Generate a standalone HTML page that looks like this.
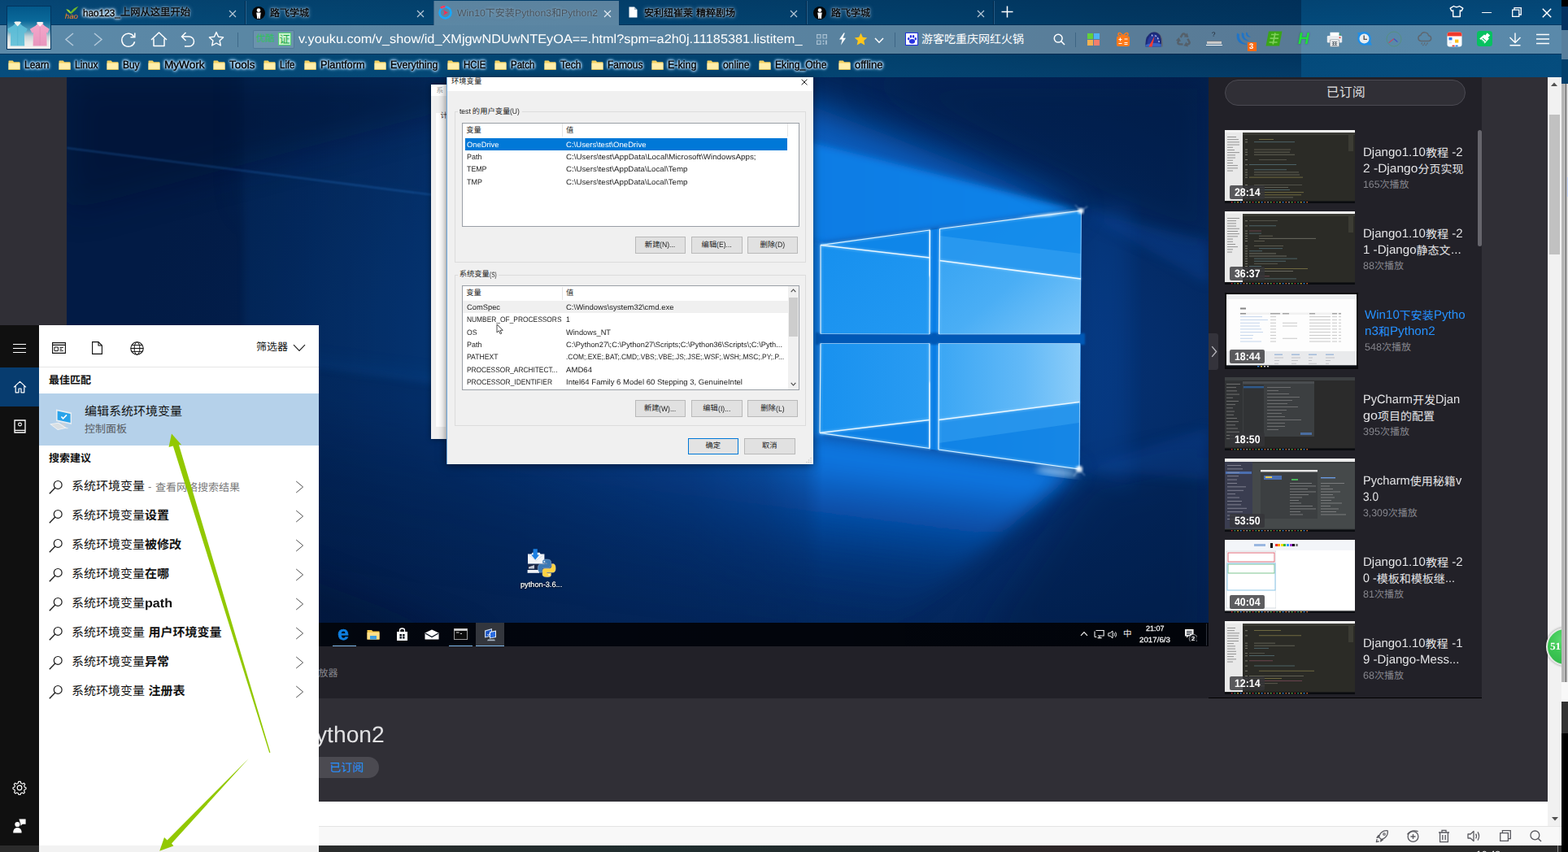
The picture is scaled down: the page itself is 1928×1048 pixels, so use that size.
<!DOCTYPE html>
<html lang="zh"><head><meta charset="utf-8"><title>Win10下安装Python3和Python2</title>
<style>
html,body{margin:0;padding:0;background:#000;}
body{width:1928px;height:1048px;overflow:hidden;position:relative;font-family:"Liberation Sans",sans-serif;text-rendering:geometricPrecision;}
#root{position:absolute;left:0;top:0;width:1928px;height:1048px;overflow:hidden;}
#root div,#root span.t,#root span.c,#root>svg,#root div>svg{position:absolute;}
span.t{white-space:pre;transform-origin:0 50%;display:block;}
span.c{display:block;overflow:visible;line-height:1;white-space:pre;font-family:"Liberation Sans","Noto Sans CJK SC",sans-serif;}
</style></head><body><div id="root">
<div style="left:0px;top:0px;width:1920px;height:95px;background:linear-gradient(90deg,#064c7c 0,#044875 300px,#034471 700px,#02406c 1100px,#023862 1400px,#01345e 1599.5px,#034a7b 1600px,#044c7d 1920px);"></div><div style="left:0px;top:0px;width:1920px;height:95px;background:linear-gradient(180deg,rgba(0,10,40,.10) 0,rgba(0,0,0,0) 30px,rgba(0,0,0,0) 66px,rgba(10,80,130,.25) 95px);"></div><div style="left:533px;top:1px;width:228px;height:30px;background:rgba(255,255,255,.355);"></div><div style="left:0px;top:31px;width:1920px;height:35px;background:rgba(255,255,255,.345);"></div><div style="left:0px;top:30px;width:533px;height:1px;background:rgba(0,20,50,.35);"></div><div style="left:761px;top:30px;width:1159px;height:1px;background:rgba(0,20,50,.35);"></div><div style="left:0px;top:66px;width:1920px;height:1px;background:rgba(0,20,50,.4);"></div><div style="left:301px;top:1px;width:1px;height:29px;background:rgba(0,25,55,.55);"></div><div style="left:302px;top:1px;width:1px;height:29px;background:rgba(140,180,215,.28);"></div><div style="left:991px;top:1px;width:1px;height:29px;background:rgba(0,25,55,.55);"></div><div style="left:992px;top:1px;width:1px;height:29px;background:rgba(140,180,215,.28);"></div><div style="left:1221px;top:1px;width:1px;height:29px;background:rgba(0,25,55,.55);"></div><div style="left:1222px;top:1px;width:1px;height:29px;background:rgba(140,180,215,.28);"></div><div style="left:532.5px;top:1px;width:1px;height:30px;background:rgba(20,60,100,.5);"></div><div style="left:761px;top:1px;width:1px;height:30px;background:rgba(20,60,100,.5);"></div><div style="left:8.3px;top:6.6px;width:54.3px;height:54px;box-sizing:border-box;border:1px solid #02345e;background:linear-gradient(180deg,#03588a 0,#0a699a 34%,#4f9bb9 55%,#c6d4d8 71%,#e8e9e7 85%,#f6f2f0 100%)"></div><svg style="left:9.3px;top:7.6px;" width="52.3" height="52" viewBox="0 0 52.3 52"><defs><linearGradient id="shB" x1="0" y1="0" x2="0" y2="1"><stop offset="0" stop-color="#58b9d4"/><stop offset="1" stop-color="#6cc4da"/></linearGradient><linearGradient id="shP" x1="0" y1="0" x2="0" y2="1"><stop offset="0" stop-color="#f3a8cb"/><stop offset="1" stop-color="#e996bd"/></linearGradient></defs><path d="M7 23.4 L10 20.4 L15.4 20.4 L18.4 23.4 L24.8 27.4 L22.4 32.8 L20.8 31.8 L21.2 48.6 L3.8 48.6 L4.2 31.8 L2.6 32.8 L0.2 27.4 Z" fill="url(#shB)"/><path d="M8.2 19.6 L12.7 24.4 L17.2 19.6 L15.4 18.6 L10 18.6Z" fill="#f4f3ee"/><path d="M12.7 24.4 V48" stroke="#4fb0cc" stroke-width=".6"/><path d="M34.6 23.8 L37.6 20.8 L42.8 20.8 L45.8 23.8 L51.8 27.8 L49.6 32.8 L48.2 32 L48.6 48.6 L31.6 48.6 L32 32 L30.6 32.8 L27.8 27.8Z" fill="url(#shP)"/><path d="M35.8 20 L40.2 24.8 L44.6 20 L43 19 L37.4 19Z" fill="#fbf0f3"/><path d="M40.2 24.8 V48" stroke="#df8ab3" stroke-width=".6"/></svg><svg style="left:79px;top:6.5px;" width="18" height="17" viewBox="0 0 18 17"><path d="M2.4 4.6 Q6 4.4 7.8 8 Q11.4 2.6 17.4 0.8 Q14.6 5.6 8.6 10 Q6.4 10 2.4 4.6Z" fill="#6cb62c"/><path d="M2.4 4.6 Q6 4.4 7.8 8 L7.2 9.4 Q5 8 2.4 4.6Z" fill="#9bd23a"/><text x="0.6" y="15.6" font-size="9" font-style="italic" fill="#f08019" font-family="Liberation Sans,sans-serif" textLength="16" lengthAdjust="spacingAndGlyphs">hao</text></svg><span class="t" style="left:102.00px;top:7.50px;line-height:16px;font-size:12px;color:#000;transform:scaleX(0.9825);--w:45.90;text-shadow:0 0 3px rgba(228,242,255,.95),0 0 3px rgba(228,242,255,.95),0 0 3px rgba(228,242,255,.95),0 0 3px rgba(228,242,255,.95),0 0 5px rgba(215,235,255,.8),0 0 5px rgba(215,235,255,.8),0 0 5px rgba(215,235,255,.8);-webkit-text-stroke:0.35px #000;">hao123_</span><span class="c" style="left:147.90px;top:9.35px;width:86.10px;height:12.3px;font-size:12.3px;color:#000;-webkit-text-stroke:0.35px #000;filter:drop-shadow(0 0 1.2px rgba(225,240,255,.7)) drop-shadow(0 0 2.5px rgba(215,235,255,.5));">上网从这里开始</span><svg style="left:281px;top:11.5px;" width="10" height="10" viewBox="0 0 10 10"><path d="M1 1 L9 9 M9 1 L1 9" stroke="#b7c8d6" stroke-width="1.15" fill="none"/></svg><svg style="left:310px;top:7.5px;" width="16" height="16" viewBox="0 0 16 16"><circle cx="8" cy="8" r="8" fill="#050505"/><circle cx="8" cy="4.6" r="2.3" fill="#fff"/><path d="M5.2 7.6 H10.8 L10.2 11 L9.8 15 H8.4 L8 11.8 L7.6 15 H6.2 L5.8 11Z" fill="#fff"/></svg><span class="c" style="left:332.00px;top:9.50px;width:48.00px;height:12px;font-size:12px;color:#000;-webkit-text-stroke:0.35px #000;filter:drop-shadow(0 0 1.2px rgba(225,240,255,.7)) drop-shadow(0 0 2.5px rgba(215,235,255,.5));">路飞学城</span><svg style="left:511.5px;top:11.5px;" width="10" height="10" viewBox="0 0 10 10"><path d="M1 1 L9 9 M9 1 L1 9" stroke="#b7c8d6" stroke-width="1.15" fill="none"/></svg><svg style="left:539px;top:7px;" width="17" height="17" viewBox="0 0 17 17"><circle cx="8.5" cy="8.5" r="7" fill="none" stroke="#17a8ff" stroke-width="2.6"/><path d="M3 3 A7.6 7.6 0 0 1 8.5 1" stroke="#ff3b5c" stroke-width="2.6" fill="none"/><path d="M6 5.2 L12 8.5 L6 11.8 L7.6 8.5Z" fill="#ff2a50"/></svg><span class="t" style="left:562.00px;top:7.50px;line-height:16px;font-size:12px;color:#47525c;transform:scaleX(1.0239);--w:34.83;text-shadow:0 0 2px rgba(210,225,240,.5);">Win10</span><span class="c" style="left:596.83px;top:9.50px;width:36.00px;height:12px;font-size:12px;color:#47525c;filter:drop-shadow(0 0 2px rgba(210,225,240,.5));">下安装</span><span class="t" style="left:632.83px;top:7.50px;line-height:16px;font-size:12px;color:#47525c;transform:scaleX(1.0239);--w:45.09;text-shadow:0 0 2px rgba(210,225,240,.5);">Python3</span><span class="c" style="left:677.91px;top:9.50px;width:12.00px;height:12px;font-size:12px;color:#47525c;filter:drop-shadow(0 0 2px rgba(210,225,240,.5));">和</span><span class="t" style="left:689.91px;top:7.50px;line-height:16px;font-size:12px;color:#47525c;transform:scaleX(1.0239);--w:45.09;text-shadow:0 0 2px rgba(210,225,240,.5);">Python2</span><svg style="left:741.5px;top:11.5px;" width="10" height="10" viewBox="0 0 10 10"><path d="M1 1 L9 9 M9 1 L1 9" stroke="#e3ebf2" stroke-width="1.15" fill="none"/></svg><svg style="left:773px;top:8px;" width="11" height="14" viewBox="0 0 11 14"><path d="M0.5 0.5 H7 L10.5 4 V13.5 H0.5Z" fill="#fff"/><path d="M7 0.5 V4 H10.5Z" fill="#9fb3c4"/></svg><span class="c" style="left:792.00px;top:9.50px;width:60.00px;height:12px;font-size:12px;color:#000;-webkit-text-stroke:0.35px #000;filter:drop-shadow(0 0 1.2px rgba(225,240,255,.7)) drop-shadow(0 0 2.5px rgba(215,235,255,.5));">安利纽崔莱</span><span class="t" style="left:852.00px;top:7.50px;line-height:16px;font-size:12px;color:#000;transform:scaleX(1.1999);--w:4.00;text-shadow:0 0 3px rgba(228,242,255,.95),0 0 3px rgba(228,242,255,.95),0 0 3px rgba(228,242,255,.95),0 0 3px rgba(228,242,255,.95),0 0 5px rgba(215,235,255,.8),0 0 5px rgba(215,235,255,.8),0 0 5px rgba(215,235,255,.8);-webkit-text-stroke:0.35px #000;"> </span><span class="c" style="left:856.00px;top:9.50px;width:48.00px;height:12px;font-size:12px;color:#000;-webkit-text-stroke:0.35px #000;filter:drop-shadow(0 0 1.2px rgba(225,240,255,.7)) drop-shadow(0 0 2.5px rgba(215,235,255,.5));">精粹剧场</span><svg style="left:971px;top:11.5px;" width="10" height="10" viewBox="0 0 10 10"><path d="M1 1 L9 9 M9 1 L1 9" stroke="#b7c8d6" stroke-width="1.15" fill="none"/></svg><svg style="left:1000px;top:7.5px;" width="16" height="16" viewBox="0 0 16 16"><circle cx="8" cy="8" r="8" fill="#050505"/><circle cx="8" cy="4.6" r="2.3" fill="#fff"/><path d="M5.2 7.6 H10.8 L10.2 11 L9.8 15 H8.4 L8 11.8 L7.6 15 H6.2 L5.8 11Z" fill="#fff"/></svg><span class="c" style="left:1022.00px;top:9.50px;width:48.00px;height:12px;font-size:12px;color:#000;-webkit-text-stroke:0.35px #000;filter:drop-shadow(0 0 1.2px rgba(225,240,255,.7)) drop-shadow(0 0 2.5px rgba(215,235,255,.5));">路飞学城</span><svg style="left:1200.5px;top:11.5px;" width="10" height="10" viewBox="0 0 10 10"><path d="M1 1 L9 9 M9 1 L1 9" stroke="#b7c8d6" stroke-width="1.15" fill="none"/></svg><svg style="left:1231px;top:7px;" width="15" height="15" viewBox="0 0 15 15"><path d="M7.5 0.5 V14.5 M0.5 7.5 H14.5" stroke="#fff" stroke-width="1.5"/></svg><svg style="left:1782px;top:6px;" width="18" height="16" viewBox="0 0 18 16"><path d="M5.5 1.5 Q9 4 12.5 1.5 L16.8 4.2 L15 7.6 L13.3 6.8 V14.5 H4.7 V6.8 L3 7.6 L1.2 4.2 Z" fill="none" stroke="#fff" stroke-width="1.4" stroke-linejoin="round"/></svg><div style="left:1822px;top:15px;width:12px;height:1.3px;background:#fff;"></div><svg style="left:1859px;top:9px;" width="12" height="12" viewBox="0 0 12 12"><path d="M0.7 3.2 H8.8 V11.3 H0.7Z M3 3 V0.7 H11.3 V9 H9" fill="none" stroke="#fff" stroke-width="1.3"/></svg><svg style="left:1896px;top:9.5px;" width="12" height="12" viewBox="0 0 12 12"><path d="M0.8 0.8 L11.2 11.2 M11.2 0.8 L0.8 11.2" stroke="#fff" stroke-width="1.5"/></svg><svg style="left:79px;top:40px;" width="13" height="17" viewBox="0 0 13 17"><path d="M11 1 L2 8.5 L11 16" fill="none" stroke="#b3c9da" stroke-width="1.5"/></svg><svg style="left:114px;top:40px;" width="13" height="17" viewBox="0 0 13 17"><path d="M2 1 L11 8.5 L2 16" fill="none" stroke="#b3c9da" stroke-width="1.5"/></svg><svg style="left:148px;top:38.5px;" width="20" height="20" viewBox="0 0 20 20"><path d="M16.6 6 A8 8 0 1 0 17.6 12.2" fill="none" stroke="#fff" stroke-width="1.5"/><path d="M17.8 1.5 V6.8 H12.5" fill="none" stroke="#fff" stroke-width="1.5"/></svg><svg style="left:184.5px;top:39px;" width="21" height="19" viewBox="0 0 21 19"><path d="M1 10 L10.5 1 L20 10 M4 8.5 V17.5 H17 V8.5" fill="none" stroke="#fff" stroke-width="1.5" stroke-linejoin="round"/></svg><svg style="left:222px;top:39px;" width="19" height="19" viewBox="0 0 19 19"><path d="M6.5 1 L1.5 6 L6.5 11 M1.5 6 H10.5 A6 6 0 0 1 10.5 18 H5" fill="none" stroke="#fff" stroke-width="1.5"/></svg><svg style="left:256px;top:38px;" width="20" height="20" viewBox="0 0 20 20"><path d="M10 1.6 L12.5 7.2 L18.6 7.9 L14.1 12 L15.3 18 L10 15 L4.7 18 L5.9 12 L1.4 7.9 L7.5 7.2Z" fill="none" stroke="#fff" stroke-width="1.4" stroke-linejoin="round"/></svg><div style="left:292px;top:40px;width:1px;height:18px;background:rgba(40,80,115,.55);"></div><div style="left:310.6px;top:37.3px;width:51px;height:22.3px;box-sizing:border-box;border:1px solid rgba(60,100,135,.55);background:rgba(255,255,255,.10);border-radius:2px"></div><span class="c" style="left:314.50px;top:42.55px;width:23.00px;height:11.5px;font-size:11.5px;color:#2fc25b;">优酷</span><div style="left:342px;top:40.4px;width:16.2px;height:15.4px;background:#c9f3cf;box-sizing:border-box;border:1px solid #4fcf6f"></div><span class="c" style="left:343.50px;top:41.80px;width:13.00px;height:13px;font-size:13px;color:#18a844;">证</span><span class="t" style="left:367.00px;top:38.60px;line-height:20px;font-size:15.5px;color:#fff;transform:scaleX(1.0521);--w:619.50;">v.youku.com/v_show/id_XMjgwNDUwNTEyOA==.html?spm=a2h0j.11185381.listitem_</span><svg style="left:1004px;top:41.5px;" width="13" height="13" viewBox="0 0 13 13"><path d="M0.6 0.6 H5 V5 H0.6Z M8 0.6 H12.4 V5 H8Z M0.6 8 H5 V12.4 H0.6Z" fill="none" stroke="#a8c0d2" stroke-width="1.2"/><path d="M7.6 7.6 H9.4 V9.4 H7.6Z M11 7.6 H12.8 V12.8 H11Z M7.6 11 H9.4 V12.8 H7.6Z" fill="#a8c0d2"/></svg><svg style="left:1031px;top:40px;" width="10" height="16" viewBox="0 0 10 16"><path d="M6.5 0.5 L1 8.5 H4.6 L3 15.5 L9 6.8 H5.4 L7.8 0.5Z" fill="#fff"/></svg><svg style="left:1049.5px;top:40px;" width="17" height="16" viewBox="0 0 17 16"><path d="M8.5 0.8 L10.8 5.8 L16.2 6.4 L12.2 10.1 L13.3 15.4 L8.5 12.7 L3.7 15.4 L4.8 10.1 L0.8 6.4 L6.2 5.8Z" fill="#ffc61a"/></svg><svg style="left:1075px;top:46px;" width="12" height="8" viewBox="0 0 12 8"><path d="M1 1 L6 6.2 L11 1" fill="none" stroke="#fff" stroke-width="1.5"/></svg><div style="left:1100px;top:40px;width:1px;height:18px;background:rgba(40,80,115,.55);"></div><div style="left:1113px;top:40px;width:16px;height:15.5px;box-sizing:border-box;border:1.5px solid #2033e0;background:#fff"></div><svg style="left:1114.5px;top:41.5px;" width="13" height="12.5" viewBox="0 0 13 12.5"><ellipse cx="6.5" cy="8.8" rx="3.6" ry="2.9" fill="#2932e1"/><ellipse cx="2.2" cy="5.8" rx="1.3" ry="1.7" fill="#2932e1"/><ellipse cx="4.9" cy="2.9" rx="1.3" ry="1.8" fill="#2932e1"/><ellipse cx="8.1" cy="2.9" rx="1.3" ry="1.8" fill="#2932e1"/><ellipse cx="10.8" cy="5.8" rx="1.3" ry="1.7" fill="#2932e1"/></svg><span class="c" style="left:1133.00px;top:41.30px;width:126.00px;height:14px;font-size:14px;color:#fff;">游客吃重庆网红火锅</span><svg style="left:1295px;top:40.5px;" width="15" height="15" viewBox="0 0 15 15"><circle cx="6.2" cy="6.2" r="4.9" fill="none" stroke="#fff" stroke-width="1.5"/><path d="M9.8 9.8 L14 14" stroke="#fff" stroke-width="1.6"/></svg><div style="left:1321.5px;top:40px;width:1px;height:18px;background:rgba(40,80,115,.55);"></div><div style="left:1337px;top:40.5px;width:7px;height:7px;background:#62d13a;"></div><div style="left:1345px;top:40.5px;width:7px;height:7px;background:#4db3f5;"></div><div style="left:1337px;top:48.5px;width:7px;height:7px;background:#f5b150;"></div><div style="left:1345px;top:48.5px;width:7px;height:7px;background:#f57f6c;"></div><svg style="left:1372px;top:38.5px;" width="18" height="19" viewBox="0 0 18 19"><path d="M9 5 Q4 -1 3 3.2 Q2.6 5.5 9 5 Q15.4 5.5 15 3.2 Q14 -1 9 5" fill="none" stroke="#ff7a1a" stroke-width="1.6"/><rect x="1" y="5.5" width="16" height="12.5" rx="2" fill="#ff7a1a"/><path d="M3.5 9.5 H7.5 M5.5 7.5 V11.5 M3.5 14.5 H7.5 M10.5 9 H14.5 M10.5 13.5 H14.5 M10.5 15.5 H14.5" stroke="#fff" stroke-width="1.2"/></svg><svg style="left:1408px;top:37.5px;" width="22" height="21" viewBox="0 0 22 21"><path d="M0.6 19.4 Q-0.6 6.4 7.4 2.2 Q15 -0.8 20 6.6 Q22.4 11 21.6 19.4Z" fill="#5f6873"/><path d="M0.6 19.4 Q-0.6 6.4 7.4 2.2 Q14 -0.4 18.4 5.4 Q20.6 10 19.8 19.4Z" fill="#1b2a78"/><path d="M2.6 18.4 Q2 8.6 8 5 Q13.4 2.8 16.6 7.4 Q18.4 11 17.8 18.4Z" fill="#27399a"/><path d="M0.6 19.4 H19.8 Q19.9 17.6 19.7 16 Q10 13.6 0.5 17Z" fill="#3f6fd0" opacity=".8"/><path d="M4.4 19.6 L11.6 6.6 L8.6 19.6Z" fill="#ff3b30"/><path d="M12.6 5.4 l.9 1.7 M15.4 8.4 l.8 1.8 M16.8 12.2 l.5 1.8 M8.4 4.6 l.4 1.9" stroke="#e8ecff" stroke-width="1.1"/></svg><svg style="left:1446px;top:38.5px;" width="19" height="19" viewBox="0 0 19 19"><g transform="rotate(0 9.5 10.4)"><path d="M5.6 7 L8 3.2 Q9.5 1.6 11 3.2 L12.2 5" fill="none" stroke="#55606a" stroke-width="2.5"/><path d="M9.8 6.6 L15.4 7 L13.8 1.6Z" fill="#55606a"/></g><g transform="rotate(120 9.5 10.4)"><path d="M5.6 7 L8 3.2 Q9.5 1.6 11 3.2 L12.2 5" fill="none" stroke="#55606a" stroke-width="2.5"/><path d="M9.8 6.6 L15.4 7 L13.8 1.6Z" fill="#55606a"/></g><g transform="rotate(240 9.5 10.4)"><path d="M5.6 7 L8 3.2 Q9.5 1.6 11 3.2 L12.2 5" fill="none" stroke="#55606a" stroke-width="2.5"/><path d="M9.8 6.6 L15.4 7 L13.8 1.6Z" fill="#55606a"/></g></svg><span class="t" style="left:1490.30px;top:38.30px;line-height:10px;font-size:8px;color:#1c232c;--w:4.45;">?</span><div style="left:1484px;top:49.5px;width:17.5px;height:4.6px;background:#c9c9c9;"></div><div style="left:1483px;top:55px;width:19.5px;height:1.2px;background:#fff;"></div><div style="left:1484px;top:49.5px;width:17.5px;height:0.8px;background:#6f7a85;"></div><svg style="left:1519px;top:38.5px;" width="21" height="18" viewBox="0 0 21 18"><path d="M2.2 1.5 Q0 10 6 14 Q10 16.4 14.6 15.4 Q8 13.6 5.6 9 Q4.2 6 5 3 Q3.4 2.8 2.2 1.5Z" fill="#1f74c8"/><path d="M8 0.8 Q6.6 6.6 10.6 9.8 Q13.4 11.8 17 11 Q12.4 9.6 11 6.4 Q10.2 4.2 10.6 2.2 Q9 2 8 0.8Z" fill="#1f74c8"/><path d="M13 0.6 Q12.4 4 14.8 6 Q16.6 7.2 19 6.6 Q16.2 5.6 15.4 3.6 Q15 2.6 15.2 1.6 Q13.8 1.4 13 0.6Z" fill="#1f74c8"/></svg><div style="left:1534px;top:52px;width:10.5px;height:10.5px;background:#ff6a13;"></div><span class="t" style="left:1536.40px;top:51.50px;line-height:12px;font-size:9.5px;color:#fff;font-weight:bold;--w:5.28;">3</span><svg style="left:1556px;top:38px;" width="21" height="19" viewBox="0 0 21 19"><path d="M4 0.5 H20.5 L17 18.5 H0.5Z" fill="#3aa516"/><path d="M7 4.5 H16.5 M5.6 9.2 H16 M4.6 14 H14.6 M12 2.5 L9.2 16.5" stroke="#7fd05a" stroke-width="1.7" fill="none"/></svg><span class="t" style="left:1596.00px;top:35.30px;line-height:26px;font-size:20px;color:#1fe03a;font-weight:bold;font-style:italic;transform:scaleX(0.9500);--w:13.72;text-shadow:0 0 2px rgba(10,60,30,.5);">H</span><svg style="left:1630.5px;top:38.5px;" width="20" height="19" viewBox="0 0 20 19"><path d="M4.5 0.8 H15.5 V5 H4.5Z" fill="#fff"/><rect x="0.8" y="5" width="18.4" height="8.4" rx="1.2" fill="#e8ebee"/><path d="M4.5 10 H15.5 V18.2 H4.5Z" fill="#fff" stroke="#8a949c" stroke-width=".8"/><path d="M6.5 12.5 H13.5 M6.5 14.6 H13.5 M6.5 16.6 H13.5 M8.5 12 V17 M11.5 12 V17" stroke="#5b6670" stroke-width=".9"/><circle cx="16.5" cy="7.2" r="1" fill="#e53935"/><circle cx="16.6" cy="3.4" r=".9" fill="#3bb54a"/></svg><svg style="left:1667.5px;top:37.5px;" width="20" height="19" viewBox="0 0 20 19"><circle cx="9.5" cy="9.5" r="7.2" fill="#e9edf0" stroke="#1f8fe8" stroke-width="2.4"/><path d="M1 2 H7 L3 6.5Z M19 17.5 H13 L17 13Z" fill="#1f8fe8"/><path d="M9.2 5.5 V10.4 H13" stroke="#555" stroke-width="1.4" fill="none"/></svg><svg style="left:1704px;top:38px;" width="20" height="20" viewBox="0 0 20 20"><circle cx="10" cy="10" r="9" fill="none" stroke="#56907f" stroke-width="1"/><path d="M3.6 14.6 L10 9.6" stroke="#d23b57" stroke-width="1.1"/><path d="M10 9.6 L14.4 13.6" stroke="#3a49c6" stroke-width="1.1"/></svg><svg style="left:1741.5px;top:39px;" width="20" height="18" viewBox="0 0 20 18"><path d="M5 11.5 A3.7 3.7 0 0 1 5 4.2 A5 5 0 0 1 14.6 4.8 A3.4 3.4 0 0 1 15 11.5Z" fill="none" stroke="#5f6770" stroke-width="1.5"/><path d="M6.6 13.5 L5.8 15.5 M10 13.5 L9.2 15.5 M13.4 13.5 L12.6 15.5 M8.2 15.6 L7.6 17.2 M11.6 15.6 L11 17.2" stroke="#5f6770" stroke-width="1.2"/></svg><svg style="left:1779px;top:38.5px;" width="19" height="19" viewBox="0 0 19 19"><rect x="0.5" y="0.5" width="18" height="18" rx="3" fill="#fff"/><path d="M0.5 5.5 V3.5 Q0.5 0.5 3.5 0.5 H15.5 Q18.5 0.5 18.5 3.5 V5.5Z" fill="#f0392b"/><rect x="2.5" y="7" width="4" height="3.4" fill="#2a7df0"/><rect x="10" y="9.6" width="4.4" height="4" fill="#ffc21a"/><rect x="2.5" y="12" width="3.4" height="2.6" fill="#e8ebef"/><rect x="6.6" y="16.6" width="3" height="1.6" fill="#f0392b"/><rect x="10.6" y="16.6" width="3" height="1.6" fill="#2a7df0"/></svg><svg style="left:1815.5px;top:38px;" width="19" height="19" viewBox="0 0 19 19"><rect x="0" y="0" width="19" height="19" rx="3.5" fill="#07c160"/><path d="M12.6 2.6 L16.2 5.4 L13.6 8.2 L15 9.6 L9.6 15.4 L3.2 9.4 L9 4.6 L10.4 5.6Z" fill="#fff"/><path d="M5 10.6 L9.2 14.4 M7 8.8 L11.2 12.6" stroke="#07c160" stroke-width="1.1"/></svg><svg style="left:1855px;top:40px;" width="16" height="17" viewBox="0 0 16 17"><path d="M8 0.5 V12 M1.5 6 L8 12.4 L14.5 6 M1.5 15.8 H14.5" fill="none" stroke="#fff" stroke-width="1.4"/></svg><svg style="left:1889px;top:41px;" width="16" height="14" viewBox="0 0 16 14"><path d="M0 1.5 H16 M0 7 H16 M0 12.5 H16" stroke="#fff" stroke-width="1.5"/></svg><svg style="left:10px;top:73.5px;" width="15" height="12" viewBox="0 0 15 12"><path d="M0.5 1.2 Q0.5 0.5 1.2 0.5 H5.6 L7.2 2.3 H13.8 Q14.5 2.3 14.5 3 V11.5 H0.5 Z" fill="#f3d163"/><path d="M0.5 3.6 H14.5 V11.5 H0.5 Z" fill="#ffeeaa"/><path d="M0.5 11 H14.5 V11.8 H0.5Z" fill="#e9c14d"/></svg><span class="t" style="left:29.50px;top:71.10px;line-height:17px;font-size:13.3px;color:#000;transform:scaleX(0.8966);--w:30.50;text-shadow:0 0 3px rgba(190,225,255,.95),0 0 3px rgba(190,225,255,.95),0 0 3px rgba(190,225,255,.95),0 0 3px rgba(190,225,255,.95),0 0 5px rgba(170,215,252,.8),0 0 5px rgba(170,215,252,.8),0 0 5px rgba(170,215,252,.8);-webkit-text-stroke:0.4px #000;">Learn</span><svg style="left:72px;top:73.5px;" width="15" height="12" viewBox="0 0 15 12"><path d="M0.5 1.2 Q0.5 0.5 1.2 0.5 H5.6 L7.2 2.3 H13.8 Q14.5 2.3 14.5 3 V11.5 H0.5 Z" fill="#f3d163"/><path d="M0.5 3.6 H14.5 V11.5 H0.5 Z" fill="#ffeeaa"/><path d="M0.5 11 H14.5 V11.8 H0.5Z" fill="#e9c14d"/></svg><span class="t" style="left:91.50px;top:71.10px;line-height:17px;font-size:13.3px;color:#000;transform:scaleX(0.8963);--w:28.50;text-shadow:0 0 3px rgba(190,225,255,.95),0 0 3px rgba(190,225,255,.95),0 0 3px rgba(190,225,255,.95),0 0 3px rgba(190,225,255,.95),0 0 5px rgba(170,215,252,.8),0 0 5px rgba(170,215,252,.8),0 0 5px rgba(170,215,252,.8);-webkit-text-stroke:0.4px #000;">Linux</span><svg style="left:131px;top:73.5px;" width="15" height="12" viewBox="0 0 15 12"><path d="M0.5 1.2 Q0.5 0.5 1.2 0.5 H5.6 L7.2 2.3 H13.8 Q14.5 2.3 14.5 3 V11.5 H0.5 Z" fill="#f3d163"/><path d="M0.5 3.6 H14.5 V11.5 H0.5 Z" fill="#ffeeaa"/><path d="M0.5 11 H14.5 V11.8 H0.5Z" fill="#e9c14d"/></svg><span class="t" style="left:150.50px;top:71.10px;line-height:17px;font-size:13.3px;color:#000;transform:scaleX(0.8945);--w:20.50;text-shadow:0 0 3px rgba(190,225,255,.95),0 0 3px rgba(190,225,255,.95),0 0 3px rgba(190,225,255,.95),0 0 3px rgba(190,225,255,.95),0 0 5px rgba(170,215,252,.8),0 0 5px rgba(170,215,252,.8),0 0 5px rgba(170,215,252,.8);-webkit-text-stroke:0.4px #000;">Buy</span><svg style="left:182px;top:73.5px;" width="15" height="12" viewBox="0 0 15 12"><path d="M0.5 1.2 Q0.5 0.5 1.2 0.5 H5.6 L7.2 2.3 H13.8 Q14.5 2.3 14.5 3 V11.5 H0.5 Z" fill="#f3d163"/><path d="M0.5 3.6 H14.5 V11.5 H0.5 Z" fill="#ffeeaa"/><path d="M0.5 11 H14.5 V11.8 H0.5Z" fill="#e9c14d"/></svg><span class="t" style="left:201.50px;top:71.10px;line-height:17px;font-size:13.3px;color:#000;transform:scaleX(1.0202);--w:49.50;text-shadow:0 0 3px rgba(190,225,255,.95),0 0 3px rgba(190,225,255,.95),0 0 3px rgba(190,225,255,.95),0 0 3px rgba(190,225,255,.95),0 0 5px rgba(170,215,252,.8),0 0 5px rgba(170,215,252,.8),0 0 5px rgba(170,215,252,.8);-webkit-text-stroke:0.4px #000;">MyWork</span><svg style="left:262px;top:73.5px;" width="15" height="12" viewBox="0 0 15 12"><path d="M0.5 1.2 Q0.5 0.5 1.2 0.5 H5.6 L7.2 2.3 H13.8 Q14.5 2.3 14.5 3 V11.5 H0.5 Z" fill="#f3d163"/><path d="M0.5 3.6 H14.5 V11.5 H0.5 Z" fill="#ffeeaa"/><path d="M0.5 11 H14.5 V11.8 H0.5Z" fill="#e9c14d"/></svg><span class="t" style="left:281.50px;top:71.10px;line-height:17px;font-size:13.3px;color:#000;transform:scaleX(1.0145);--w:31.50;text-shadow:0 0 3px rgba(190,225,255,.95),0 0 3px rgba(190,225,255,.95),0 0 3px rgba(190,225,255,.95),0 0 3px rgba(190,225,255,.95),0 0 5px rgba(170,215,252,.8),0 0 5px rgba(170,215,252,.8),0 0 5px rgba(170,215,252,.8);-webkit-text-stroke:0.4px #000;">Tools</span><svg style="left:324px;top:73.5px;" width="15" height="12" viewBox="0 0 15 12"><path d="M0.5 1.2 Q0.5 0.5 1.2 0.5 H5.6 L7.2 2.3 H13.8 Q14.5 2.3 14.5 3 V11.5 H0.5 Z" fill="#f3d163"/><path d="M0.5 3.6 H14.5 V11.5 H0.5 Z" fill="#ffeeaa"/><path d="M0.5 11 H14.5 V11.8 H0.5Z" fill="#e9c14d"/></svg><span class="t" style="left:343.50px;top:71.10px;line-height:17px;font-size:13.3px;color:#000;transform:scaleX(0.8627);--w:18.50;text-shadow:0 0 3px rgba(190,225,255,.95),0 0 3px rgba(190,225,255,.95),0 0 3px rgba(190,225,255,.95),0 0 3px rgba(190,225,255,.95),0 0 5px rgba(170,215,252,.8),0 0 5px rgba(170,215,252,.8),0 0 5px rgba(170,215,252,.8);-webkit-text-stroke:0.4px #000;">Life</span><svg style="left:374px;top:73.5px;" width="15" height="12" viewBox="0 0 15 12"><path d="M0.5 1.2 Q0.5 0.5 1.2 0.5 H5.6 L7.2 2.3 H13.8 Q14.5 2.3 14.5 3 V11.5 H0.5 Z" fill="#f3d163"/><path d="M0.5 3.6 H14.5 V11.5 H0.5 Z" fill="#ffeeaa"/><path d="M0.5 11 H14.5 V11.8 H0.5Z" fill="#e9c14d"/></svg><span class="t" style="left:393.50px;top:71.10px;line-height:17px;font-size:13.3px;color:#000;transform:scaleX(0.9575);--w:54.50;text-shadow:0 0 3px rgba(190,225,255,.95),0 0 3px rgba(190,225,255,.95),0 0 3px rgba(190,225,255,.95),0 0 3px rgba(190,225,255,.95),0 0 5px rgba(170,215,252,.8),0 0 5px rgba(170,215,252,.8),0 0 5px rgba(170,215,252,.8);-webkit-text-stroke:0.4px #000;">Plantform</span><svg style="left:460px;top:73.5px;" width="15" height="12" viewBox="0 0 15 12"><path d="M0.5 1.2 Q0.5 0.5 1.2 0.5 H5.6 L7.2 2.3 H13.8 Q14.5 2.3 14.5 3 V11.5 H0.5 Z" fill="#f3d163"/><path d="M0.5 3.6 H14.5 V11.5 H0.5 Z" fill="#ffeeaa"/><path d="M0.5 11 H14.5 V11.8 H0.5Z" fill="#e9c14d"/></svg><span class="t" style="left:479.50px;top:71.10px;line-height:17px;font-size:13.3px;color:#000;transform:scaleX(0.9309);--w:58.50;text-shadow:0 0 3px rgba(190,225,255,.95),0 0 3px rgba(190,225,255,.95),0 0 3px rgba(190,225,255,.95),0 0 3px rgba(190,225,255,.95),0 0 5px rgba(170,215,252,.8),0 0 5px rgba(170,215,252,.8),0 0 5px rgba(170,215,252,.8);-webkit-text-stroke:0.4px #000;">Everything</span><svg style="left:550px;top:73.5px;" width="15" height="12" viewBox="0 0 15 12"><path d="M0.5 1.2 Q0.5 0.5 1.2 0.5 H5.6 L7.2 2.3 H13.8 Q14.5 2.3 14.5 3 V11.5 H0.5 Z" fill="#f3d163"/><path d="M0.5 3.6 H14.5 V11.5 H0.5 Z" fill="#ffeeaa"/><path d="M0.5 11 H14.5 V11.8 H0.5Z" fill="#e9c14d"/></svg><span class="t" style="left:569.50px;top:71.10px;line-height:17px;font-size:13.3px;color:#000;transform:scaleX(0.8654);--w:27.50;text-shadow:0 0 3px rgba(190,225,255,.95),0 0 3px rgba(190,225,255,.95),0 0 3px rgba(190,225,255,.95),0 0 3px rgba(190,225,255,.95),0 0 5px rgba(170,215,252,.8),0 0 5px rgba(170,215,252,.8),0 0 5px rgba(170,215,252,.8);-webkit-text-stroke:0.4px #000;">HCIE</span><svg style="left:608px;top:73.5px;" width="15" height="12" viewBox="0 0 15 12"><path d="M0.5 1.2 Q0.5 0.5 1.2 0.5 H5.6 L7.2 2.3 H13.8 Q14.5 2.3 14.5 3 V11.5 H0.5 Z" fill="#f3d163"/><path d="M0.5 3.6 H14.5 V11.5 H0.5 Z" fill="#ffeeaa"/><path d="M0.5 11 H14.5 V11.8 H0.5Z" fill="#e9c14d"/></svg><span class="t" style="left:627.50px;top:71.10px;line-height:17px;font-size:13.3px;color:#000;transform:scaleX(0.8674);--w:29.50;text-shadow:0 0 3px rgba(190,225,255,.95),0 0 3px rgba(190,225,255,.95),0 0 3px rgba(190,225,255,.95),0 0 3px rgba(190,225,255,.95),0 0 5px rgba(170,215,252,.8),0 0 5px rgba(170,215,252,.8),0 0 5px rgba(170,215,252,.8);-webkit-text-stroke:0.4px #000;">Patch</span><svg style="left:669px;top:73.5px;" width="15" height="12" viewBox="0 0 15 12"><path d="M0.5 1.2 Q0.5 0.5 1.2 0.5 H5.6 L7.2 2.3 H13.8 Q14.5 2.3 14.5 3 V11.5 H0.5 Z" fill="#f3d163"/><path d="M0.5 3.6 H14.5 V11.5 H0.5 Z" fill="#ffeeaa"/><path d="M0.5 11 H14.5 V11.8 H0.5Z" fill="#e9c14d"/></svg><span class="t" style="left:688.50px;top:71.10px;line-height:17px;font-size:13.3px;color:#000;transform:scaleX(0.9077);--w:25.50;text-shadow:0 0 3px rgba(190,225,255,.95),0 0 3px rgba(190,225,255,.95),0 0 3px rgba(190,225,255,.95),0 0 3px rgba(190,225,255,.95),0 0 5px rgba(170,215,252,.8),0 0 5px rgba(170,215,252,.8),0 0 5px rgba(170,215,252,.8);-webkit-text-stroke:0.4px #000;">Tech</span><svg style="left:727px;top:73.5px;" width="15" height="12" viewBox="0 0 15 12"><path d="M0.5 1.2 Q0.5 0.5 1.2 0.5 H5.6 L7.2 2.3 H13.8 Q14.5 2.3 14.5 3 V11.5 H0.5 Z" fill="#f3d163"/><path d="M0.5 3.6 H14.5 V11.5 H0.5 Z" fill="#ffeeaa"/><path d="M0.5 11 H14.5 V11.8 H0.5Z" fill="#e9c14d"/></svg><span class="t" style="left:746.50px;top:71.10px;line-height:17px;font-size:13.3px;color:#000;transform:scaleX(0.9054);--w:43.50;text-shadow:0 0 3px rgba(190,225,255,.95),0 0 3px rgba(190,225,255,.95),0 0 3px rgba(190,225,255,.95),0 0 3px rgba(190,225,255,.95),0 0 5px rgba(170,215,252,.8),0 0 5px rgba(170,215,252,.8),0 0 5px rgba(170,215,252,.8);-webkit-text-stroke:0.4px #000;">Famous</span><svg style="left:801px;top:73.5px;" width="15" height="12" viewBox="0 0 15 12"><path d="M0.5 1.2 Q0.5 0.5 1.2 0.5 H5.6 L7.2 2.3 H13.8 Q14.5 2.3 14.5 3 V11.5 H0.5 Z" fill="#f3d163"/><path d="M0.5 3.6 H14.5 V11.5 H0.5 Z" fill="#ffeeaa"/><path d="M0.5 11 H14.5 V11.8 H0.5Z" fill="#e9c14d"/></svg><span class="t" style="left:820.50px;top:71.10px;line-height:17px;font-size:13.3px;color:#000;transform:scaleX(0.9416);--w:35.50;text-shadow:0 0 3px rgba(190,225,255,.95),0 0 3px rgba(190,225,255,.95),0 0 3px rgba(190,225,255,.95),0 0 3px rgba(190,225,255,.95),0 0 5px rgba(170,215,252,.8),0 0 5px rgba(170,215,252,.8),0 0 5px rgba(170,215,252,.8);-webkit-text-stroke:0.4px #000;">E-king</span><svg style="left:869px;top:73.5px;" width="15" height="12" viewBox="0 0 15 12"><path d="M0.5 1.2 Q0.5 0.5 1.2 0.5 H5.6 L7.2 2.3 H13.8 Q14.5 2.3 14.5 3 V11.5 H0.5 Z" fill="#f3d163"/><path d="M0.5 3.6 H14.5 V11.5 H0.5 Z" fill="#ffeeaa"/><path d="M0.5 11 H14.5 V11.8 H0.5Z" fill="#e9c14d"/></svg><span class="t" style="left:888.50px;top:71.10px;line-height:17px;font-size:13.3px;color:#000;transform:scaleX(0.9155);--w:32.50;text-shadow:0 0 3px rgba(190,225,255,.95),0 0 3px rgba(190,225,255,.95),0 0 3px rgba(190,225,255,.95),0 0 3px rgba(190,225,255,.95),0 0 5px rgba(170,215,252,.8),0 0 5px rgba(170,215,252,.8),0 0 5px rgba(170,215,252,.8);-webkit-text-stroke:0.4px #000;">online</span><svg style="left:933px;top:73.5px;" width="15" height="12" viewBox="0 0 15 12"><path d="M0.5 1.2 Q0.5 0.5 1.2 0.5 H5.6 L7.2 2.3 H13.8 Q14.5 2.3 14.5 3 V11.5 H0.5 Z" fill="#f3d163"/><path d="M0.5 3.6 H14.5 V11.5 H0.5 Z" fill="#ffeeaa"/><path d="M0.5 11 H14.5 V11.8 H0.5Z" fill="#e9c14d"/></svg><span class="t" style="left:952.50px;top:71.10px;line-height:17px;font-size:13.3px;color:#000;transform:scaleX(0.9136);--w:63.50;text-shadow:0 0 3px rgba(190,225,255,.95),0 0 3px rgba(190,225,255,.95),0 0 3px rgba(190,225,255,.95),0 0 3px rgba(190,225,255,.95),0 0 5px rgba(170,215,252,.8),0 0 5px rgba(170,215,252,.8),0 0 5px rgba(170,215,252,.8);-webkit-text-stroke:0.4px #000;">Eking_Othe</span><svg style="left:1031px;top:73.5px;" width="15" height="12" viewBox="0 0 15 12"><path d="M0.5 1.2 Q0.5 0.5 1.2 0.5 H5.6 L7.2 2.3 H13.8 Q14.5 2.3 14.5 3 V11.5 H0.5 Z" fill="#f3d163"/><path d="M0.5 3.6 H14.5 V11.5 H0.5 Z" fill="#ffeeaa"/><path d="M0.5 11 H14.5 V11.8 H0.5Z" fill="#e9c14d"/></svg><span class="t" style="left:1050.50px;top:71.10px;line-height:17px;font-size:13.3px;color:#000;transform:scaleX(0.9787);--w:34.50;text-shadow:0 0 3px rgba(190,225,255,.95),0 0 3px rgba(190,225,255,.95),0 0 3px rgba(190,225,255,.95),0 0 3px rgba(190,225,255,.95),0 0 5px rgba(170,215,252,.8),0 0 5px rgba(170,215,252,.8),0 0 5px rgba(170,215,252,.8);-webkit-text-stroke:0.4px #000;">offline</span><svg style="left:82px;top:95px" width="1404" height="701" viewBox="82 95 1404 701"><defs><radialGradient id="amb" cx="1080" cy="450" r="920" gradientUnits="userSpaceOnUse" gradientTransform="translate(1100 450) scale(1 .62) translate(-1100 -450)"><stop offset="0" stop-color="#0850ac" stop-opacity=".7"/><stop offset=".35" stop-color="#063f90" stop-opacity=".55"/><stop offset=".7" stop-color="#04306e" stop-opacity=".36"/><stop offset="1" stop-color="#032458" stop-opacity="0"/></radialGradient><radialGradient id="lit" cx="1170" cy="420" r="450" gradientUnits="userSpaceOnUse"><stop offset="0" stop-color="#0c7ee6" stop-opacity="1"/><stop offset=".36" stop-color="#0b78e0" stop-opacity="1"/><stop offset=".5" stop-color="#0a6ad2" stop-opacity=".66"/><stop offset=".68" stop-color="#0a58ba" stop-opacity=".34"/><stop offset="1" stop-color="#0a4aa0" stop-opacity="0"/></radialGradient><linearGradient id="coreT" x1="1329" y1="0" x2="600" y2="0" gradientUnits="userSpaceOnUse"><stop offset="0" stop-color="#0a84ea"/><stop offset=".45" stop-color="#0a7ce4"/><stop offset="1" stop-color="#0a70d8"/></linearGradient><linearGradient id="botG" x1="1160" y1="553" x2="1128" y2="800" gradientUnits="userSpaceOnUse"><stop offset="0" stop-color="#0a7ae4" stop-opacity="1"/><stop offset=".14" stop-color="#0a74de" stop-opacity="1"/><stop offset=".38" stop-color="#0a5cc0" stop-opacity=".66"/><stop offset=".62" stop-color="#08489c" stop-opacity=".32"/><stop offset=".85" stop-color="#063a84" stop-opacity=".1"/><stop offset="1" stop-color="#063a84" stop-opacity="0"/></linearGradient><linearGradient id="mx" x1="1000" y1="0" x2="250" y2="0" gradientUnits="userSpaceOnUse"><stop offset="0" stop-color="#fff"/><stop offset=".2" stop-color="#9a9a9a"/><stop offset=".45" stop-color="#484848"/><stop offset=".6" stop-color="#2a2a2a"/><stop offset="1" stop-color="#121212"/></linearGradient><mask id="mkx" maskUnits="userSpaceOnUse" x="0" y="0" width="1500" height="900"><rect x="0" y="0" width="1500" height="900" fill="url(#mx)"/><rect x="1000" y="0" width="500" height="900" fill="#fff"/></mask><linearGradient id="mxb" x1="1012" y1="0" x2="250" y2="0" gradientUnits="userSpaceOnUse"><stop offset="0" stop-color="#fff"/><stop offset=".03" stop-color="#aaa"/><stop offset=".095" stop-color="#6a6a6a"/><stop offset=".21" stop-color="#3c3c3c"/><stop offset=".41" stop-color="#282828"/><stop offset=".6" stop-color="#1c1c1c"/><stop offset="1" stop-color="#101010"/></linearGradient><mask id="mkb" maskUnits="userSpaceOnUse" x="0" y="0" width="1500" height="900"><rect x="0" y="0" width="1500" height="900" fill="url(#mxb)"/><rect x="1012" y="0" width="488" height="900" fill="#fff"/></mask><linearGradient id="far" x1="1000" y1="0" x2="82" y2="0" gradientUnits="userSpaceOnUse"><stop offset="0" stop-color="#0a55b4" stop-opacity=".45"/><stop offset=".5" stop-color="#08469a" stop-opacity=".2"/><stop offset="1" stop-color="#083f8c" stop-opacity=".05"/></linearGradient><linearGradient id="pTL" x1="0" y1="0" x2="1" y2="1"><stop offset="0" stop-color="#158fee"/><stop offset="1" stop-color="#2399f2"/></linearGradient><linearGradient id="pTR" x1="0" y1="0" x2="1" y2="1"><stop offset="0" stop-color="#2e9ff2"/><stop offset=".55" stop-color="#4aaef5"/><stop offset="1" stop-color="#80c8f9"/></linearGradient><linearGradient id="pBL" x1="0" y1="0" x2="1" y2="0"><stop offset="0" stop-color="#1891ef"/><stop offset="1" stop-color="#2a9cf2"/></linearGradient><linearGradient id="pBR" x1="0" y1="0" x2="1" y2="0"><stop offset="0" stop-color="#3aa6f4"/><stop offset=".6" stop-color="#62b9f7"/><stop offset="1" stop-color="#8ccdf9"/></linearGradient><filter id="b2" x="-20%" y="-20%" width="140%" height="140%"><feGaussianBlur stdDeviation="1.6"/></filter><filter id="b4" x="-20%" y="-20%" width="140%" height="140%"><feGaussianBlur stdDeviation="4"/></filter><filter id="b6" x="-20%" y="-20%" width="140%" height="140%"><feGaussianBlur stdDeviation="7"/></filter><filter id="b12" x="-20%" y="-20%" width="140%" height="140%"><feGaussianBlur stdDeviation="12"/></filter><filter id="b18" x="-30%" y="-30%" width="160%" height="160%"><feGaussianBlur stdDeviation="22"/></filter><filter id="b1" x="-20%" y="-20%" width="140%" height="140%"><feGaussianBlur stdDeviation=".8"/></filter></defs><rect x="82" y="95" width="1404" height="701" fill="#021b45"/><rect x="82" y="95" width="1404" height="701" fill="url(#amb)"/><g mask="url(#mkx)"><path d="M1329 259 L1075 160 L300 -140 L300 262 L1156 281Z" fill="#0a6cd6" opacity=".8" filter="url(#b18)"/><path d="M1329 259 L1000 176 L300 0 L300 210 L1009 301 L1143 283 L1156 281Z" fill="url(#coreT)" filter="url(#b4)"/><path d="M1012 296 L300 205 L300 440 L1012 540Z" fill="#0a7ae2" filter="url(#b4)"/></g><g mask="url(#mkb)"><path d="M1327 577 L1154 553 L1143 551.5 L1008 532.5 L300 432 L300 900 L940 900 L1060 800Z" fill="url(#botG)" filter="url(#b12)"/></g><path d="M1330 259 L1009 300 L1008 534 L1328 578Z" fill="#0a7ee6"/><path d="M1345 245 L1060 95 L1486 95 L1486 300Z" fill="#01153a" opacity=".38" filter="url(#b18)"/><path d="M1340 590 L1486 560 L1486 796 L1200 796Z" fill="#01153a" opacity=".35" filter="url(#b18)"/><path d="M82 95 L700 95 L82 260Z" fill="#010f2c" opacity=".4" filter="url(#b18)"/><path d="M82 796 L82 600 L600 796Z" fill="#010f2c" opacity=".35" filter="url(#b18)"/><path d="M82 182 L1009 301" stroke="#2f86e0" stroke-width="1.6" opacity=".38" filter="url(#b1)"/><path d="M1329 259 L1486 296 L1486 350Z" fill="#0a4aa0" opacity=".35" filter="url(#b6)"/><path d="M1327 577 L1486 525 L1486 590Z" fill="#0a4aa0" opacity=".3" filter="url(#b6)"/><path d="M1329 259 L1390 250 L1390 600 L1327 577Z" fill="#0a5cc0" opacity=".2" filter="url(#b12)"/><path d="M1003 409 L1334 409.5 L1334 424 L1003 424Z" fill="#0558b6" filter="url(#b1)"/><path d="M1009 301.5 L1143.5 283 L1143 411 L1009 410.5Z" fill="url(#pTL)"/><path d="M1155.5 281.5 L1329.5 259 L1328 411 L1154.5 411Z" fill="url(#pTR)"/><path d="M1009 422.5 L1143 422.5 L1143 551.5 L1008 532.5Z" fill="url(#pBL)"/><path d="M1154.5 422.5 L1328 422.5 L1327 577 L1154 553Z" fill="url(#pBR)"/><path d="M1009 301.5 L1143.5 283 L1143.4 317 Z" fill="#0d84e8" opacity=".85"/><path d="M1155.5 281.5 L1329.5 259 L1329 343 L1155.5 320.5Z" fill="#1088ea" opacity=".9"/><path d="M1155.5 290 L1329 312 L1329 343 L1155.5 320.5Z" fill="#3aa4f2" opacity=".55"/><path d="M1008 532.5 L1143 516.5 L1143 551.5Z" fill="#0c80e4" opacity=".9"/><path d="M1154.3 516.5 L1327.3 494.5 L1327 577 L1154 553Z" fill="#0c80e4" opacity=".92"/><path d="M1154.3 516.5 L1327.3 494.5 L1327.2 520 L1154.2 545Z" fill="#3aa4f2" opacity=".5"/><path d="M1009 301.5 L1143.5 283 M1155.5 281.5 L1329.5 259 M1008 532.5 L1143 551.5 M1154 553 L1327 577 M1009 301.5 L1009 410.5 M1009 422.5 L1008 532.5 M1143.5 283 L1143 411 M1143 422.5 L1143 551.5 M1155.5 281.5 L1154.5 411 M1154.5 422.5 L1154 553" stroke="#8fd2ff" stroke-width="3" fill="none" opacity=".45" filter="url(#b2)"/><path d="M1009 301.5 L1143.5 283 M1155.5 281.5 L1329.5 259 M1008 532.5 L1143 551.5 M1154 553 L1327 577 M1009 301.5 L1009 410.5 M1009 422.5 L1008 532.5 M1143.5 283 L1143 411 M1143 422.5 L1143 551.5 M1155.5 281.5 L1154.5 411 M1154.5 422.5 L1154 553" stroke="#e8f7ff" stroke-width="1.2" fill="none" opacity=".95"/><path d="M1329.5 259 L1328 411 M1328 422.5 L1327 577 M1009 410.5 L1143 411 M1154.5 411 L1328 411 M1009 422.5 L1143 422.5 M1154.5 422.5 L1328 422.5" stroke="#cfeaff" stroke-width="1" fill="none" opacity=".6"/><path d="M1143.3 283 L1143 340 M1143 470 L1143 552" stroke="#fff" stroke-width="3" opacity=".7" filter="url(#b2)"/><path d="M1009 301.5 L1143.4 317 M1155.5 320.5 L1329 343 M1008 532.5 L1143 516.5 M1154.3 516.5 L1327.3 494.5" stroke="#9fd8ff" stroke-width="3" fill="none" opacity=".5" filter="url(#b2)"/><path d="M1009 301.5 L1143.4 317 M1155.5 320.5 L1329 343 M1008 532.5 L1143 516.5 M1154.3 516.5 L1327.3 494.5" stroke="#f2fbff" stroke-width="1.6" fill="none" opacity=".95"/><circle cx="1329" cy="259.5" r="3.5" fill="#fff" opacity=".9" filter="url(#b2)"/><circle cx="1327" cy="577" r="4" fill="#fff" opacity=".9" filter="url(#b2)"/><ellipse cx="1300" cy="580.5" rx="26" ry="4.5" fill="#bfe4ff" opacity=".7" filter="url(#b4)" transform="rotate(7 1300 580.5)"/><path d="M1329 259 L1290 262.5 L1250 268 L1290 266Z" fill="#dff2ff" opacity=".8" filter="url(#b2)"/><path d="M1329 259.5 L1322 252 M1329 259.5 L1337 254 M1327 577 L1334 585 M1327 577 L1320 586" stroke="#cfeaff" stroke-width="1" opacity=".7" filter="url(#b1)"/></svg><svg style="left:645px;top:672px;" width="42" height="42" viewBox="0 0 42 42"><path d="M4 9.6 L8.6 9.6 L9.6 7.8 L18.6 7.8 L19.6 9.6 L24.4 9.6 L24.4 21.6 L4 21.6Z" fill="#f3f5f9"/><path d="M4.4 10 L14.2 17.4 L24 10" fill="none" stroke="#d5dbe6" stroke-width=".9"/><path d="M4 22 H18 V28.6 H4Z" fill="#1b2746"/><path d="M5 25.4 L12 23 L12 27.4 L5 27.6Z" fill="#dfe4ee" opacity=".85"/><path d="M3.6 29 H18 V32.8 H3.6Z" fill="#eef1f6"/><path d="M10.6 3.2 H15.8 V10.4 H18.2 L13.2 16.4 L8.2 10.4 H10.6Z" fill="#1b7fe2"/><g transform="translate(16.4 16) scale(1.09)" stroke="#e9eef5" stroke-width=".5" stroke-opacity=".6"><path d="M9.9 0 C4.8 0 5.2 2.2 5.2 2.2 V4.5 H10 V5.2 H3.2 C3.2 5.2 0 4.8 0 10 C0 15.1 2.8 14.9 2.8 14.9 H4.5 V12.5 C4.5 12.5 4.4 9.7 7.3 9.7 H12.1 C12.1 9.7 14.8 9.7 14.8 7.1 V2.7 C14.8 2.7 15.2 0 9.9 0Z" fill="#3b78b4"/><path d="M10.1 20 C15.2 20 14.8 17.8 14.8 17.8 V15.5 H10 V14.8 H16.8 C16.8 14.8 20 15.2 20 10 C20 4.9 17.2 5.1 17.2 5.1 H15.5 V7.5 C15.5 7.5 15.6 10.3 12.7 10.3 H7.9 C7.9 10.3 5.2 10.3 5.2 12.9 V17.3 C5.2 17.3 4.8 20 10.1 20Z" fill="#ffd342"/><circle cx="7.3" cy="2.5" r=".9" fill="#e9f2fb" stroke="none"/><circle cx="12.7" cy="17.5" r=".9" fill="#fff6d8" stroke="none"/></g></svg><span class="t" style="left:639.60px;top:712.80px;line-height:12px;font-size:9.2px;color:#fff;--w:51.20;text-shadow:0 1px 2px rgba(0,0,0,.95),0 0 2px rgba(0,0,0,.8);-webkit-text-stroke:0.2px #fff;">python-3.6...</span><div style="left:530px;top:104px;width:19px;height:436px;background:#f0f0f0;box-shadow:0 0 6px rgba(0,0,0,.45)"></div><div style="left:530px;top:104px;width:19px;height:14px;background:#fff;"></div><span class="c" style="left:536.50px;top:107.25px;width:8.50px;height:8.5px;font-size:8.5px;color:#9a9a9a;">系</span><div style="left:536px;top:125px;width:12px;height:400px;background:#fff;"></div><div style="left:536px;top:125px;width:12px;height:14px;background:#f0f0f0;"></div><span class="c" style="left:541.50px;top:137.50px;width:9.00px;height:9px;font-size:9px;color:#333;">计</span><div style="left:548.5px;top:95px;width:451px;height:475.5px;background:#f0f0f0;box-shadow:0 1px 10px rgba(0,0,0,.55)"></div><div style="left:548.5px;top:95px;width:451px;height:16.5px;background:#fff;"></div><div style="left:548.5px;top:95px;width:1px;height:475.5px;background:#6fa8dc;"></div><span class="c" style="left:555.00px;top:96.05px;width:37.20px;height:9.3px;font-size:9.3px;color:#222;">环境变量</span><svg style="left:984.5px;top:96.5px;" width="8" height="8" viewBox="0 0 8 8"><path d="M0.6 0.6 L7.4 7.4 M7.4 0.6 L0.6 7.4" stroke="#222" stroke-width="1"/></svg><div style="left:558.5px;top:137px;width:432.5px;height:186px;box-sizing:border-box;border:1px solid #dcdcdc"></div><div style="left:562.5px;top:131px;width:79px;height:12px;background:#f0f0f0;"></div><span class="t" style="left:564.70px;top:131.30px;line-height:12px;font-size:9.3px;color:#1b1b1b;transform:scaleX(0.9185);--w:16.14;">test </span><span class="c" style="left:580.84px;top:132.65px;width:46.50px;height:9.3px;font-size:9.3px;color:#1b1b1b;">的用户变量</span><span class="t" style="left:627.34px;top:131.30px;line-height:12px;font-size:9.3px;color:#1b1b1b;transform:scaleX(0.9185);--w:11.86;">(U)</span><div style="left:567.5px;top:150.5px;width:415px;height:128.5px;box-sizing:border-box;border:1px solid #9a9fa6;background:#fff"></div><div style="left:691px;top:152px;width:1px;height:16px;background:#e5e5e5;"></div><div style="left:967.5px;top:152px;width:1px;height:16px;background:#e5e5e5;"></div><span class="c" style="left:573.30px;top:156.05px;width:18.60px;height:9.3px;font-size:9.3px;color:#1b1b1b;">变量</span><span class="c" style="left:696.00px;top:156.05px;width:9.30px;height:9.3px;font-size:9.3px;color:#1b1b1b;">值</span><div style="left:571.5px;top:169.5px;width:396.5px;height:15px;background:#0078d7;"></div><span class="t" style="left:573.50px;top:171.50px;line-height:12px;font-size:9.3px;color:#fff;transform:scaleX(1.0056);--w:39.50;">OneDrive</span><span class="t" style="left:696.00px;top:171.50px;line-height:12px;font-size:9.3px;color:#fff;transform:scaleX(1.0303);--w:98.50;">C:\Users\test\OneDrive</span><span class="t" style="left:573.50px;top:186.90px;line-height:12px;font-size:9.3px;color:#1b1b1b;transform:scaleX(0.9670);--w:18.50;">Path</span><span class="t" style="left:696.00px;top:186.90px;line-height:12px;font-size:9.3px;color:#1b1b1b;transform:scaleX(1.0531);--w:233.50;">C:\Users\test\AppData\Local\Microsoft\WindowsApps;</span><span class="t" style="left:573.50px;top:202.30px;line-height:12px;font-size:9.3px;color:#1b1b1b;transform:scaleX(0.9483);--w:24.50;">TEMP</span><span class="t" style="left:696.00px;top:202.30px;line-height:12px;font-size:9.3px;color:#1b1b1b;transform:scaleX(1.0479);--w:149.50;">C:\Users\test\AppData\Local\Temp</span><span class="t" style="left:573.50px;top:217.70px;line-height:12px;font-size:9.3px;color:#1b1b1b;transform:scaleX(0.9678);--w:19.00;">TMP</span><span class="t" style="left:696.00px;top:217.70px;line-height:12px;font-size:9.3px;color:#1b1b1b;transform:scaleX(1.0479);--w:149.50;">C:\Users\test\AppData\Local\Temp</span><div style="left:780.5px;top:291px;width:62.5px;height:20.5px;box-sizing:border-box;border:1px solid #b9b9b9;background:#e1e1e1"></div><span class="c" style="left:792.84px;top:296.80px;width:18.60px;height:9.3px;font-size:9.3px;color:#1b1b1b;">新建</span><span class="t" style="left:811.44px;top:295.45px;line-height:12px;font-size:9.3px;color:#1b1b1b;transform:scaleX(0.9300);--w:19.22;">(N)...</span><div style="left:850px;top:291px;width:62.5px;height:20.5px;box-sizing:border-box;border:1px solid #b9b9b9;background:#e1e1e1"></div><span class="c" style="left:862.58px;top:296.80px;width:18.60px;height:9.3px;font-size:9.3px;color:#1b1b1b;">编辑</span><span class="t" style="left:881.18px;top:295.45px;line-height:12px;font-size:9.3px;color:#1b1b1b;transform:scaleX(0.9300);--w:18.74;">(E)...</span><div style="left:918.5px;top:291px;width:62.5px;height:20.5px;box-sizing:border-box;border:1px solid #b9b9b9;background:#e1e1e1"></div><span class="c" style="left:934.45px;top:296.80px;width:18.60px;height:9.3px;font-size:9.3px;color:#1b1b1b;">删除</span><span class="t" style="left:953.05px;top:295.45px;line-height:12px;font-size:9.3px;color:#1b1b1b;transform:scaleX(0.9300);--w:12.01;">(D)</span><div style="left:558.5px;top:337.5px;width:432.5px;height:186.5px;box-sizing:border-box;border:1px solid #dcdcdc"></div><div style="left:562.5px;top:331.5px;width:50px;height:12px;background:#f0f0f0;"></div><span class="c" style="left:564.70px;top:333.15px;width:37.20px;height:9.3px;font-size:9.3px;color:#1b1b1b;">系统变量</span><span class="t" style="left:601.90px;top:331.80px;line-height:12px;font-size:9.3px;color:#1b1b1b;transform:scaleX(0.7098);--w:8.80;">(S)</span><div style="left:567.5px;top:351px;width:415px;height:128.5px;box-sizing:border-box;border:1px solid #9a9fa6;background:#fff"></div><div style="left:691px;top:352.5px;width:1px;height:16px;background:#e5e5e5;"></div><span class="c" style="left:573.30px;top:356.35px;width:18.60px;height:9.3px;font-size:9.3px;color:#1b1b1b;">变量</span><span class="c" style="left:696.00px;top:356.35px;width:9.30px;height:9.3px;font-size:9.3px;color:#1b1b1b;">值</span><div style="left:568.5px;top:370px;width:400px;height:15.3px;background:#f0f0f0;"></div><span class="t" style="left:573.50px;top:371.90px;line-height:12px;font-size:9.3px;color:#1b1b1b;transform:scaleX(1.0041);--w:41.00;">ComSpec</span><span class="t" style="left:696.00px;top:371.90px;line-height:12px;font-size:9.3px;color:#1b1b1b;transform:scaleX(1.0214);--w:132.50;">C:\Windows\system32\cmd.exe</span><span class="t" style="left:573.50px;top:387.27px;line-height:12px;font-size:9.3px;color:#1b1b1b;transform:scaleX(0.9017);--w:116.50;">NUMBER_OF_PROCESSORS</span><span class="t" style="left:696.00px;top:387.27px;line-height:12px;font-size:9.3px;color:#1b1b1b;transform:scaleX(0.9300);--w:4.81;">1</span><span class="t" style="left:573.50px;top:402.64px;line-height:12px;font-size:9.3px;color:#1b1b1b;transform:scaleX(0.9303);--w:12.50;">OS</span><span class="t" style="left:696.00px;top:402.64px;line-height:12px;font-size:9.3px;color:#1b1b1b;transform:scaleX(0.9946);--w:55.00;">Windows_NT</span><span class="t" style="left:573.50px;top:418.01px;line-height:12px;font-size:9.3px;color:#1b1b1b;transform:scaleX(0.9670);--w:18.50;">Path</span><span class="t" style="left:696.00px;top:418.01px;line-height:12px;font-size:9.3px;color:#1b1b1b;--w:266.00;">C:\Python27\;C:\Python27\Scripts;C:\Python36\Scripts\;C:\Pyth...</span><span class="t" style="left:573.50px;top:433.38px;line-height:12px;font-size:9.3px;color:#1b1b1b;transform:scaleX(0.9275);--w:38.50;">PATHEXT</span><span class="t" style="left:696.00px;top:433.38px;line-height:12px;font-size:9.3px;color:#1b1b1b;transform:scaleX(0.9080);--w:268.00;">.COM;.EXE;.BAT;.CMD;.VBS;.VBE;.JS;.JSE;.WSF;.WSH;.MSC;.PY;.P...</span><span class="t" style="left:573.50px;top:448.75px;line-height:12px;font-size:9.3px;color:#1b1b1b;transform:scaleX(0.8953);--w:111.50;">PROCESSOR_ARCHITECT...</span><span class="t" style="left:696.00px;top:448.75px;line-height:12px;font-size:9.3px;color:#1b1b1b;transform:scaleX(1.0319);--w:32.00;">AMD64</span><span class="t" style="left:573.50px;top:464.12px;line-height:12px;font-size:9.3px;color:#1b1b1b;transform:scaleX(0.9031);--w:105.00;">PROCESSOR_IDENTIFIER</span><span class="t" style="left:696.00px;top:464.12px;line-height:12px;font-size:9.3px;color:#1b1b1b;transform:scaleX(1.0262);--w:217.00;">Intel64 Family 6 Model 60 Stepping 3, GenuineIntel</span><div style="left:969px;top:352px;width:12.5px;height:126.5px;background:#f0f0f0;"></div><div style="left:969.5px;top:365.8px;width:11.5px;height:48.7px;background:#cdcdcd;"></div><svg style="left:971.5px;top:355px;" width="7" height="5" viewBox="0 0 7 5"><path d="M0.7 4.2 L3.5 1 L6.3 4.2" fill="none" stroke="#444" stroke-width="1.1"/></svg><svg style="left:971.5px;top:470px;" width="7" height="5" viewBox="0 0 7 5"><path d="M0.7 0.8 L3.5 4 L6.3 0.8" fill="none" stroke="#444" stroke-width="1.1"/></svg><div style="left:780.5px;top:492.3px;width:62.5px;height:20.3px;box-sizing:border-box;border:1px solid #b9b9b9;background:#e1e1e1"></div><span class="c" style="left:791.88px;top:498.00px;width:18.60px;height:9.3px;font-size:9.3px;color:#1b1b1b;">新建</span><span class="t" style="left:810.48px;top:496.65px;line-height:12px;font-size:9.3px;color:#1b1b1b;transform:scaleX(0.9300);--w:21.13;">(W)...</span><div style="left:850px;top:492.3px;width:62.5px;height:20.3px;box-sizing:border-box;border:1px solid #b9b9b9;background:#e1e1e1"></div><span class="c" style="left:864.26px;top:498.00px;width:18.60px;height:9.3px;font-size:9.3px;color:#1b1b1b;">编辑</span><span class="t" style="left:882.86px;top:496.65px;line-height:12px;font-size:9.3px;color:#1b1b1b;transform:scaleX(0.9300);--w:15.37;">(I)...</span><div style="left:918.5px;top:492.3px;width:62.5px;height:20.3px;box-sizing:border-box;border:1px solid #b9b9b9;background:#e1e1e1"></div><span class="c" style="left:935.16px;top:498.00px;width:18.60px;height:9.3px;font-size:9.3px;color:#1b1b1b;">删除</span><span class="t" style="left:953.76px;top:496.65px;line-height:12px;font-size:9.3px;color:#1b1b1b;transform:scaleX(0.9300);--w:10.57;">(L)</span><div style="left:845.5px;top:538.5px;width:62.5px;height:20px;box-sizing:border-box;border:1.6px solid #0078d7;background:#e3e3e3"></div><span class="c" style="left:867.45px;top:544.05px;width:18.60px;height:9.3px;font-size:9.3px;color:#1b1b1b;">确定</span><div style="left:915px;top:538.5px;width:62.5px;height:20px;box-sizing:border-box;border:1px solid #b9b9b9;background:#e1e1e1"></div><span class="c" style="left:936.95px;top:544.05px;width:18.60px;height:9.3px;font-size:9.3px;color:#1b1b1b;">取消</span><svg style="left:991px;top:562px;" width="7" height="7" viewBox="0 0 7 7"><path d="M6 1 V2 M6 3.5 V4.5 M6 6 V7 M3.5 3.5 V4.5 M3.5 6 V7 M1 6 V7" stroke="#b8b8b8" stroke-width="1.2"/></svg><svg style="left:610px;top:398px;" width="9" height="14" viewBox="0 0 9 14"><path d="M1 1 V11 L3.4 8.8 L5.2 12.8 L6.8 12.1 L5 8.3 H8.3Z" fill="#fff" stroke="#222" stroke-width=".8"/></svg><div style="left:82px;top:765.5px;width:1404px;height:29.5px;background:#02060f;"></div><div style="left:82px;top:765.5px;width:1404px;height:29.5px;background:linear-gradient(90deg,rgba(0,0,0,.0) 0,rgba(0,0,0,.2) 60%,rgba(0,0,0,.35) 100%);"></div><div style="left:585px;top:765.5px;width:35px;height:29px;background:#33363d;"></div><div style="left:409px;top:793.5px;width:29px;height:1.3px;background:#7fb8ea;"></div><div style="left:552px;top:793.5px;width:29px;height:1.3px;background:#7fb8ea;"></div><div style="left:585px;top:793.5px;width:35px;height:1.3px;background:#7fb8ea;"></div><span class="t" style="left:415.00px;top:763.50px;line-height:31px;font-size:24px;color:#0f7fe0;font-weight:bold;transform:scaleX(1.0500);--w:14.02;-webkit-text-stroke:0.5px #0f7fe0;">e</span><svg style="left:451px;top:773px;" width="16" height="14" viewBox="0 0 16 14"><path d="M0.5 2 H6 L7.5 3.6 H15.5 V13.5 H0.5Z" fill="#f5c84c"/><path d="M0.5 5 H15.5 V13.5 H0.5Z" fill="#ffe08a"/><path d="M4 9 H12 V13.5 H4Z" fill="#3f9fe0"/></svg><svg style="left:487px;top:771.5px;" width="15" height="17" viewBox="0 0 15 17"><path d="M1 5 H14 V16 H1Z" fill="#fff"/><path d="M4.5 5 V3.2 Q4.5 1 7.5 1 Q10.5 1 10.5 3.2 V5" fill="none" stroke="#fff" stroke-width="1.3"/><path d="M4.4 8 H7 V10.4 H4.4Z M8 8 H10.6 V10.4 H8Z M4.4 11.2 H7 V13.6 H4.4Z M8 11.2 H10.6 V13.6 H8Z" fill="#020a18"/></svg><svg style="left:522px;top:773.5px;" width="18" height="13" viewBox="0 0 18 13"><path d="M0.5 4.5 L9 0.5 L17.5 4.5 V12.5 H0.5Z" fill="#fff"/><path d="M2 5.2 L16 5.2 L9.4 9 L16 12 L2 12 Z" fill="#020a18" opacity=".0"/><path d="M1 5 L9 9.5 L17 5" fill="none" stroke="#020a18" stroke-width="1.2"/></svg><svg style="left:558px;top:773px;" width="17" height="14" viewBox="0 0 17 14"><rect x="0.5" y="0.5" width="16" height="13" fill="#0c0c0c" stroke="#9a9a9a" stroke-width="1"/><rect x="0.5" y="0.5" width="16" height="2.4" fill="#d8d8d8"/><path d="M3 5 H6.5 M8 6.4 H10" stroke="#ddd" stroke-width="1"/></svg><svg style="left:594px;top:771.5px;" width="18" height="17" viewBox="0 0 18 17"><path d="M2 3.5 L11 1 V10.5 L2 12.5Z" fill="#c9d7ea"/><path d="M3.2 4.4 L10 2.6 V9.6 L3.2 11.2Z" fill="#1c54c4"/><path d="M8 5 L16 3.4 V12 L8 13.6Z" fill="#e6edf6"/><path d="M9 6 L15 4.8 V11.2 L9 12.4Z" fill="#2a6be0"/><path d="M6 14.5 H14 L15 16.2 H5Z" fill="#aab6c6"/><path d="M5.4 8.2 L6.6 9.4 L8.8 6.6" stroke="#fff" stroke-width="1" fill="none"/></svg><svg style="left:1328px;top:776px;" width="10" height="7" viewBox="0 0 10 7"><path d="M1 5.8 L5 1.6 L9 5.8" fill="none" stroke="#eee" stroke-width="1.2"/></svg><svg style="left:1344.5px;top:774px;" width="13" height="12" viewBox="0 0 13 12"><path d="M2.5 1.5 H12.2 V8 H5 M1 2.5 V9.5 M1 9.5 H3.4 M7 8 V10.4 M4.6 10.6 H9.6" fill="none" stroke="#eee" stroke-width="1.1"/></svg><svg style="left:1362px;top:774.5px;" width="13" height="11" viewBox="0 0 13 11"><path d="M0.8 3.8 H3 L6 1 V10 L3 7.2 H0.8Z" fill="none" stroke="#eee" stroke-width="1"/><path d="M7.8 3.6 Q9 5.5 7.8 7.4 M9.6 2.4 Q11.6 5.5 9.6 8.6" fill="none" stroke="#eee" stroke-width="1"/></svg><span class="c" style="left:1381.00px;top:775.25px;width:10.50px;height:10.5px;font-size:10.5px;color:#f2f2f2;">中</span><span class="t" style="left:1409.00px;top:767.40px;line-height:12px;font-size:9px;color:#f2f2f2;--w:22.50;-webkit-text-stroke:0.25px #f2f2f2;">21:07</span><span class="t" style="left:1400.50px;top:781.30px;line-height:12px;font-size:9px;color:#f2f2f2;transform:scaleX(1.0847);--w:38.00;-webkit-text-stroke:0.25px #f2f2f2;">2017/6/3</span><svg style="left:1456px;top:773px;" width="16" height="16" viewBox="0 0 16 16"><path d="M1 1 H11.6 V9.6 H5 L3 11.8 V9.6 H1Z" fill="#f2f2f2"/><path d="M3 3.6 H9.6 M3 5.6 H9.6 M3 7.5 H7" stroke="#020a18" stroke-width=".9"/><circle cx="11.4" cy="12.6" r="5.2" fill="#14171d" stroke="#8a8d92" stroke-width="1"/></svg><span class="t" style="left:1465.20px;top:780.80px;line-height:10px;font-size:7.5px;color:#fff;font-weight:bold;--w:4.17;">2</span><div style="left:1482.5px;top:767px;width:1px;height:27px;background:#2c313a;"></div><div style="left:0px;top:95px;width:82px;height:920px;background:#302f36;"></div><div style="left:1486px;top:95px;width:336px;height:763px;background:#222128;"></div><div style="left:1822px;top:95px;width:81px;height:891px;background:#302f36;"></div><div style="left:1506px;top:98px;width:296px;height:32px;box-sizing:border-box;border:1px solid #4b4a52;border-radius:16px;background:#302f36"></div><span class="c" style="left:1630.80px;top:106.70px;width:48.00px;height:16px;font-size:16px;color:#dcdcde;">已订阅</span><div style="left:1816.5px;top:160px;width:5px;height:143px;background:#66656c;border-radius:2.5px"></div><div style="left:1486px;top:410px;width:12px;height:45px;background:#34333b;border-radius:0 3px 3px 0"></div><svg style="left:1488.5px;top:425px;" width="8" height="15" viewBox="0 0 8 15"><path d="M1.2 1.2 L6.6 7.5 L1.2 13.8" fill="none" stroke="#b9b9bf" stroke-width="1.3"/></svg><svg style="left:1506px;top:160px;" width="160" height="90" viewBox="0 0 160 90"><rect width="160" height="90" fill="#2b2b26"/><rect width="160" height="3" fill="#f4f4f4"/><rect y="3" width="22" height="84" fill="#e9e9e9"/><rect x="22" y="3" width="138" height="3" fill="#3a3a34"/><rect x="42" y="11.2" width="18" height=".8" fill="#d8c86a" opacity=".5"/><rect x="25" y="11.2" width="3" height="1" fill="#77776a"/><rect x="36" y="14.3" width="50" height=".8" fill="#7fb8c9" opacity=".5"/><rect x="25" y="14.3" width="3" height="1" fill="#77776a"/><rect x="36" y="23.6" width="45" height=".8" fill="#a6a08a" opacity=".5"/><rect x="25" y="23.6" width="3" height="1" fill="#77776a"/><rect x="36" y="26.7" width="44" height=".8" fill="#b0b09a" opacity=".5"/><rect x="25" y="26.7" width="3" height="1" fill="#77776a"/><rect x="36" y="29.8" width="50" height=".8" fill="#b0b09a" opacity=".5"/><rect x="25" y="29.8" width="3" height="1" fill="#77776a"/><rect x="42" y="36.0" width="34" height=".8" fill="#8f8f80" opacity=".5"/><rect x="25" y="36.0" width="3" height="1" fill="#77776a"/><rect x="30" y="42.2" width="58" height=".8" fill="#7fb8c9" opacity=".5"/><rect x="25" y="42.2" width="3" height="1" fill="#77776a"/><rect x="36" y="48.4" width="40" height=".8" fill="#7fb8c9" opacity=".5"/><rect x="25" y="48.4" width="3" height="1" fill="#77776a"/><rect x="36" y="51.5" width="55" height=".8" fill="#b0b09a" opacity=".5"/><rect x="25" y="51.5" width="3" height="1" fill="#77776a"/><rect x="36" y="54.6" width="56" height=".8" fill="#b0b09a" opacity=".5"/><rect x="25" y="54.6" width="3" height="1" fill="#77776a"/><rect x="30" y="57.7" width="66" height=".8" fill="#d8c86a" opacity=".5"/><rect x="25" y="57.7" width="3" height="1" fill="#77776a"/><rect x="36" y="67.0" width="59" height=".8" fill="#8f8f80" opacity=".5"/><rect x="25" y="67.0" width="3" height="1" fill="#77776a"/><rect x="36" y="70.1" width="42" height=".8" fill="#b0b09a" opacity=".5"/><rect x="25" y="70.1" width="3" height="1" fill="#77776a"/><rect x="36" y="73.2" width="44" height=".8" fill="#7fb8c9" opacity=".5"/><rect x="25" y="73.2" width="3" height="1" fill="#77776a"/><rect x="30" y="76.3" width="67" height=".8" fill="#d8c86a" opacity=".5"/><rect x="25" y="76.3" width="3" height="1" fill="#77776a"/><rect x="30" y="79.4" width="64" height=".8" fill="#d8c86a" opacity=".5"/><rect x="25" y="79.4" width="3" height="1" fill="#77776a"/><rect x="30" y="82.5" width="54" height=".8" fill="#b0b09a" opacity=".5"/><rect x="25" y="82.5" width="3" height="1" fill="#77776a"/><rect x="3" y="8.0" width="11" height=".9" fill="#8a8a8a"/><rect x="3" y="11.2" width="14" height=".9" fill="#8a8a8a"/><rect x="3" y="14.4" width="15" height=".9" fill="#8a8a8a"/><rect x="3" y="17.6" width="15" height=".9" fill="#8a8a8a"/><rect x="3" y="20.8" width="7" height=".9" fill="#8a8a8a"/><rect x="3" y="24.0" width="9" height=".9" fill="#8a8a8a"/><rect x="3" y="27.2" width="15" height=".9" fill="#8a8a8a"/><rect x="3" y="30.4" width="10" height=".9" fill="#8a8a8a"/><rect x="3" y="33.6" width="10" height=".9" fill="#8a8a8a"/><rect x="3" y="36.8" width="7" height=".9" fill="#8a8a8a"/><rect x="3" y="40.0" width="7" height=".9" fill="#8a8a8a"/><rect x="3" y="43.2" width="13" height=".9" fill="#8a8a8a"/><rect x="3" y="46.4" width="13" height=".9" fill="#8a8a8a"/><rect x="3" y="49.6" width="7" height=".9" fill="#8a8a8a"/><rect x="152" y="6" width="6" height="20" fill="#3c3c34"/><rect y="87.4" width="160" height="2.6" fill="#0a0c10"/><rect x="8.0" y="88" width="1.4" height="1.4" fill="#d33"/><rect x="11.7" y="88" width="1.4" height="1.4" fill="#3a7"/><rect x="15.4" y="88" width="1.4" height="1.4" fill="#fc3"/><rect x="19.1" y="88" width="1.4" height="1.4" fill="#39f"/><rect x="22.8" y="88" width="1.4" height="1.4" fill="#e73"/><rect x="26.5" y="88" width="1.4" height="1.4" fill="#bbb"/><rect x="30.2" y="88" width="1.4" height="1.4" fill="#6c4"/><rect x="33.9" y="88" width="1.4" height="1.4" fill="#d33"/><rect x="37.6" y="88" width="1.4" height="1.4" fill="#3a7"/><rect x="41.3" y="88" width="1.4" height="1.4" fill="#fc3"/><rect x="45.0" y="88" width="1.4" height="1.4" fill="#39f"/><rect x="48.7" y="88" width="1.4" height="1.4" fill="#e73"/><rect x="52.4" y="88" width="1.4" height="1.4" fill="#bbb"/><rect x="56.1" y="88" width="1.4" height="1.4" fill="#6c4"/><rect x="59.8" y="88" width="1.4" height="1.4" fill="#d33"/><rect x="63.5" y="88" width="1.4" height="1.4" fill="#3a7"/><rect x="67.2" y="88" width="1.4" height="1.4" fill="#fc3"/><rect x="70.9" y="88" width="1.4" height="1.4" fill="#39f"/><rect x="74.6" y="88" width="1.4" height="1.4" fill="#e73"/><rect x="78.3" y="88" width="1.4" height="1.4" fill="#bbb"/><rect x="82.0" y="88" width="1.4" height="1.4" fill="#6c4"/><rect x="85.7" y="88" width="1.4" height="1.4" fill="#d33"/><rect x="89.4" y="88" width="1.4" height="1.4" fill="#3a7"/><rect x="93.1" y="88" width="1.4" height="1.4" fill="#fc3"/><rect x="96.8" y="88" width="1.4" height="1.4" fill="#39f"/><rect x="100.5" y="88" width="1.4" height="1.4" fill="#e73"/></svg><div style="left:1512px;top:228.3px;width:43px;height:16.6px;background:rgba(52,52,56,.8);border-radius:2px"></div><span class="t" style="left:1518.00px;top:228.00px;line-height:18px;font-size:13.5px;color:#fff;font-weight:bold;transform:scaleX(0.9123);--w:31.50;">28:14</span><span class="t" style="left:1676.00px;top:178.00px;line-height:20px;font-size:15px;color:#e4e4e6;--w:76.95;">Django1.10</span><span class="c" style="left:1752.95px;top:180.70px;width:28.00px;height:14px;font-size:14px;color:#e4e4e6;">教程</span><span class="t" style="left:1780.95px;top:178.00px;line-height:20px;font-size:15px;color:#e4e4e6;--w:17.55;"> -2</span><span class="t" style="left:1676.00px;top:197.80px;line-height:20px;font-size:15px;color:#e4e4e6;transform:scaleX(1.0363);--w:67.40;">2 -Django</span><span class="c" style="left:1743.40px;top:200.50px;width:56.00px;height:14px;font-size:14px;color:#e4e4e6;">分页实现</span><span class="t" style="left:1676.00px;top:218.80px;line-height:16px;font-size:12.5px;color:#85858c;transform:scaleX(0.9877);--w:20.60;">165</span><span class="c" style="left:1696.60px;top:220.80px;width:36.00px;height:12px;font-size:12px;color:#85858c;">次播放</span><svg style="left:1506px;top:260px;" width="160" height="90" viewBox="0 0 160 90"><rect width="160" height="90" fill="#2b2b26"/><rect width="160" height="3" fill="#f4f4f4"/><rect y="3" width="22" height="84" fill="#e9e9e9"/><rect x="22" y="3" width="138" height="3" fill="#3a3a34"/><rect x="30" y="11.2" width="35" height=".8" fill="#8f8f80" opacity=".5"/><rect x="25" y="11.2" width="3" height="1" fill="#77776a"/><rect x="30" y="17.4" width="33" height=".8" fill="#7fb8c9" opacity=".5"/><rect x="25" y="17.4" width="3" height="1" fill="#77776a"/><rect x="30" y="23.6" width="15" height=".8" fill="#c96a8a" opacity=".5"/><rect x="25" y="23.6" width="3" height="1" fill="#77776a"/><rect x="30" y="26.7" width="15" height=".8" fill="#7fb8c9" opacity=".5"/><rect x="25" y="26.7" width="3" height="1" fill="#77776a"/><rect x="42" y="29.8" width="17" height=".8" fill="#a6a08a" opacity=".5"/><rect x="25" y="29.8" width="3" height="1" fill="#77776a"/><rect x="42" y="32.9" width="70" height=".8" fill="#c9c9b8" opacity=".5"/><rect x="25" y="32.9" width="3" height="1" fill="#77776a"/><rect x="36" y="36.0" width="13" height=".8" fill="#a6a08a" opacity=".5"/><rect x="25" y="36.0" width="3" height="1" fill="#77776a"/><rect x="36" y="42.2" width="36" height=".8" fill="#a6a08a" opacity=".5"/><rect x="25" y="42.2" width="3" height="1" fill="#77776a"/><rect x="42" y="45.3" width="29" height=".8" fill="#7fb8c9" opacity=".5"/><rect x="25" y="45.3" width="3" height="1" fill="#77776a"/><rect x="30" y="48.4" width="16" height=".8" fill="#7fb8c9" opacity=".5"/><rect x="25" y="48.4" width="3" height="1" fill="#77776a"/><rect x="30" y="51.5" width="33" height=".8" fill="#c9c9b8" opacity=".5"/><rect x="25" y="51.5" width="3" height="1" fill="#77776a"/><rect x="30" y="54.6" width="46" height=".8" fill="#c9c9b8" opacity=".5"/><rect x="25" y="54.6" width="3" height="1" fill="#77776a"/><rect x="36" y="57.7" width="53" height=".8" fill="#7fb8c9" opacity=".5"/><rect x="25" y="57.7" width="3" height="1" fill="#77776a"/><rect x="36" y="60.8" width="39" height=".8" fill="#7fb8c9" opacity=".5"/><rect x="25" y="60.8" width="3" height="1" fill="#77776a"/><rect x="36" y="63.9" width="29" height=".8" fill="#a6a08a" opacity=".5"/><rect x="25" y="63.9" width="3" height="1" fill="#77776a"/><rect x="30" y="67.0" width="15" height=".8" fill="#7fb8c9" opacity=".5"/><rect x="25" y="67.0" width="3" height="1" fill="#77776a"/><rect x="36" y="70.1" width="66" height=".8" fill="#d8c86a" opacity=".5"/><rect x="25" y="70.1" width="3" height="1" fill="#77776a"/><rect x="36" y="73.2" width="48" height=".8" fill="#c9c9b8" opacity=".5"/><rect x="25" y="73.2" width="3" height="1" fill="#77776a"/><rect x="36" y="79.4" width="19" height=".8" fill="#c96a8a" opacity=".5"/><rect x="25" y="79.4" width="3" height="1" fill="#77776a"/><rect x="30" y="82.5" width="58" height=".8" fill="#7fb8c9" opacity=".5"/><rect x="25" y="82.5" width="3" height="1" fill="#77776a"/><rect x="3" y="8.0" width="15" height=".9" fill="#8a8a8a"/><rect x="3" y="11.2" width="11" height=".9" fill="#8a8a8a"/><rect x="3" y="14.4" width="11" height=".9" fill="#8a8a8a"/><rect x="3" y="17.6" width="11" height=".9" fill="#8a8a8a"/><rect x="3" y="20.8" width="15" height=".9" fill="#8a8a8a"/><rect x="3" y="24.0" width="13" height=".9" fill="#8a8a8a"/><rect x="3" y="27.2" width="15" height=".9" fill="#8a8a8a"/><rect x="3" y="30.4" width="13" height=".9" fill="#8a8a8a"/><rect x="3" y="33.6" width="7" height=".9" fill="#8a8a8a"/><rect x="3" y="36.8" width="7" height=".9" fill="#8a8a8a"/><rect x="3" y="40.0" width="10" height=".9" fill="#8a8a8a"/><rect x="3" y="43.2" width="13" height=".9" fill="#8a8a8a"/><rect x="3" y="46.4" width="7" height=".9" fill="#8a8a8a"/><rect x="3" y="49.6" width="6" height=".9" fill="#8a8a8a"/><rect x="152" y="6" width="6" height="20" fill="#3c3c34"/><rect y="87.4" width="160" height="2.6" fill="#0a0c10"/><rect x="8.0" y="88" width="1.4" height="1.4" fill="#d33"/><rect x="11.7" y="88" width="1.4" height="1.4" fill="#3a7"/><rect x="15.4" y="88" width="1.4" height="1.4" fill="#fc3"/><rect x="19.1" y="88" width="1.4" height="1.4" fill="#39f"/><rect x="22.8" y="88" width="1.4" height="1.4" fill="#e73"/><rect x="26.5" y="88" width="1.4" height="1.4" fill="#bbb"/><rect x="30.2" y="88" width="1.4" height="1.4" fill="#6c4"/><rect x="33.9" y="88" width="1.4" height="1.4" fill="#d33"/><rect x="37.6" y="88" width="1.4" height="1.4" fill="#3a7"/><rect x="41.3" y="88" width="1.4" height="1.4" fill="#fc3"/><rect x="45.0" y="88" width="1.4" height="1.4" fill="#39f"/><rect x="48.7" y="88" width="1.4" height="1.4" fill="#e73"/><rect x="52.4" y="88" width="1.4" height="1.4" fill="#bbb"/><rect x="56.1" y="88" width="1.4" height="1.4" fill="#6c4"/><rect x="59.8" y="88" width="1.4" height="1.4" fill="#d33"/><rect x="63.5" y="88" width="1.4" height="1.4" fill="#3a7"/><rect x="67.2" y="88" width="1.4" height="1.4" fill="#fc3"/><rect x="70.9" y="88" width="1.4" height="1.4" fill="#39f"/><rect x="74.6" y="88" width="1.4" height="1.4" fill="#e73"/><rect x="78.3" y="88" width="1.4" height="1.4" fill="#bbb"/><rect x="82.0" y="88" width="1.4" height="1.4" fill="#6c4"/><rect x="85.7" y="88" width="1.4" height="1.4" fill="#d33"/><rect x="89.4" y="88" width="1.4" height="1.4" fill="#3a7"/><rect x="93.1" y="88" width="1.4" height="1.4" fill="#fc3"/><rect x="96.8" y="88" width="1.4" height="1.4" fill="#39f"/><rect x="100.5" y="88" width="1.4" height="1.4" fill="#e73"/></svg><div style="left:1512px;top:328.3px;width:43px;height:16.6px;background:rgba(52,52,56,.8);border-radius:2px"></div><span class="t" style="left:1518.00px;top:328.00px;line-height:18px;font-size:13.5px;color:#fff;font-weight:bold;transform:scaleX(0.9123);--w:31.50;">36:37</span><span class="t" style="left:1676.00px;top:278.00px;line-height:20px;font-size:15px;color:#e4e4e6;--w:76.95;">Django1.10</span><span class="c" style="left:1752.95px;top:280.70px;width:28.00px;height:14px;font-size:14px;color:#e4e4e6;">教程</span><span class="t" style="left:1780.95px;top:278.00px;line-height:20px;font-size:15px;color:#e4e4e6;--w:17.55;"> -2</span><span class="t" style="left:1676.00px;top:297.80px;line-height:20px;font-size:15px;color:#e4e4e6;transform:scaleX(1.0085);--w:65.59;">1 -Django</span><span class="c" style="left:1741.59px;top:300.50px;width:42.00px;height:14px;font-size:14px;color:#e4e4e6;">静态文</span><span class="t" style="left:1783.59px;top:297.80px;line-height:20px;font-size:15px;color:#e4e4e6;transform:scaleX(1.0085);--w:12.61;">...</span><span class="t" style="left:1676.00px;top:318.80px;line-height:16px;font-size:12.5px;color:#85858c;transform:scaleX(1.0069);--w:14.00;">88</span><span class="c" style="left:1690.00px;top:320.80px;width:36.00px;height:12px;font-size:12px;color:#85858c;">次播放</span><div style="left:1506px;top:360px;width:164px;height:94px;background:#0a0a0c;"></div><svg style="left:1508px;top:362px;" width="160" height="90" viewBox="0 0 160 90"><rect width="160" height="90" fill="#fdfdfd"/><rect width="160" height="6" fill="#eef0f2"/><rect x="17" y="16.5" width="7" height="2" fill="#666" opacity=".8"/><rect x="17" y="22.5" width="124" height="2.6" fill="#f1f1f1"/><rect x="17" y="23.4" width="7" height=".9" fill="#444" opacity="0.9"/><rect x="54" y="23.4" width="12" height=".9" fill="#666" opacity="0.9"/><rect x="69" y="23.4" width="8" height=".9" fill="#666" opacity="0.9"/><rect x="102" y="23.4" width="7" height=".9" fill="#666" opacity="0.9"/><rect x="130" y="23.4" width="6" height=".9" fill="#666" opacity="0.9"/><rect x="138" y="23.4" width="3" height=".9" fill="#666" opacity="0.9"/><rect x="17" y="27.2" width="27" height=".9" fill="#5d8fd0" opacity="0.38"/><rect x="54" y="27.2" width="7" height=".9" fill="#666" opacity="0.38"/><rect x="102" y="27.2" width="26" height=".9" fill="#666" opacity="0.38"/><rect x="130" y="27.2" width="6" height=".9" fill="#666" opacity="0.38"/><rect x="138" y="27.2" width="3" height=".9" fill="#666" opacity="0.38"/><rect x="17" y="31.0" width="34" height=".9" fill="#5d8fd0" opacity="0.38"/><rect x="54" y="31.0" width="7" height=".9" fill="#666" opacity="0.38"/><rect x="102" y="31.0" width="26" height=".9" fill="#666" opacity="0.38"/><rect x="130" y="31.0" width="6" height=".9" fill="#666" opacity="0.38"/><rect x="138" y="31.0" width="3" height=".9" fill="#666" opacity="0.38"/><rect x="17" y="34.8" width="24" height=".9" fill="#5d8fd0" opacity="0.38"/><rect x="54" y="34.8" width="7" height=".9" fill="#666" opacity="0.38"/><rect x="69" y="34.8" width="18" height=".9" fill="#666" opacity="0.38"/><rect x="102" y="34.8" width="26" height=".9" fill="#666" opacity="0.38"/><rect x="130" y="34.8" width="6" height=".9" fill="#666" opacity="0.38"/><rect x="138" y="34.8" width="3" height=".9" fill="#666" opacity="0.38"/><rect x="17" y="38.6" width="24" height=".9" fill="#5d8fd0" opacity="0.38"/><rect x="54" y="38.6" width="7" height=".9" fill="#666" opacity="0.38"/><rect x="69" y="38.6" width="18" height=".9" fill="#666" opacity="0.38"/><rect x="102" y="38.6" width="26" height=".9" fill="#666" opacity="0.38"/><rect x="130" y="38.6" width="6" height=".9" fill="#666" opacity="0.38"/><rect x="138" y="38.6" width="3" height=".9" fill="#666" opacity="0.38"/><rect x="17" y="42.4" width="26" height=".9" fill="#5d8fd0" opacity="0.38"/><rect x="54" y="42.4" width="7" height=".9" fill="#666" opacity="0.38"/><rect x="102" y="42.4" width="26" height=".9" fill="#666" opacity="0.38"/><rect x="130" y="42.4" width="6" height=".9" fill="#666" opacity="0.38"/><rect x="138" y="42.4" width="3" height=".9" fill="#666" opacity="0.38"/><rect x="17" y="46.2" width="28" height=".9" fill="#5d8fd0" opacity="0.38"/><rect x="54" y="46.2" width="7" height=".9" fill="#666" opacity="0.38"/><rect x="102" y="46.2" width="26" height=".9" fill="#666" opacity="0.38"/><rect x="130" y="46.2" width="6" height=".9" fill="#666" opacity="0.38"/><rect x="138" y="46.2" width="3" height=".9" fill="#666" opacity="0.38"/><rect x="17" y="50.0" width="16" height=".9" fill="#5d8fd0" opacity="0.38"/><rect x="54" y="50.0" width="7" height=".9" fill="#666" opacity="0.38"/><rect x="102" y="50.0" width="26" height=".9" fill="#666" opacity="0.38"/><rect x="130" y="50.0" width="6" height=".9" fill="#666" opacity="0.38"/><rect x="138" y="50.0" width="3" height=".9" fill="#666" opacity="0.38"/><rect x="17" y="53.8" width="15" height=".9" fill="#5d8fd0" opacity="0.38"/><rect x="54" y="53.8" width="7" height=".9" fill="#666" opacity="0.38"/><rect x="69" y="53.8" width="18" height=".9" fill="#666" opacity="0.38"/><rect x="102" y="53.8" width="26" height=".9" fill="#666" opacity="0.38"/><rect x="130" y="53.8" width="6" height=".9" fill="#666" opacity="0.38"/><rect x="138" y="53.8" width="3" height=".9" fill="#666" opacity="0.38"/><rect x="17" y="57.6" width="26" height=".9" fill="#5d8fd0" opacity="0.38"/><rect x="54" y="57.6" width="7" height=".9" fill="#666" opacity="0.38"/><rect x="102" y="57.6" width="26" height=".9" fill="#666" opacity="0.38"/><rect x="130" y="57.6" width="6" height=".9" fill="#666" opacity="0.38"/><rect x="138" y="57.6" width="3" height=".9" fill="#666" opacity="0.38"/><rect y="70" width="160" height="17.5" fill="#e9eaec"/><rect x="59" y="73.6" width="10" height="1.1" fill="#4a7fc4" opacity=".6"/><rect x="59" y="77.6" width="11" height=".8" fill="#7a7f86" opacity=".45"/><rect x="59" y="81.2" width="6" height=".8" fill="#7a7f86" opacity=".45"/><rect x="59" y="84.8" width="5" height=".8" fill="#7a7f86" opacity=".45"/><rect x="80" y="73.6" width="10" height="1.1" fill="#4a7fc4" opacity=".6"/><rect x="80" y="77.6" width="11" height=".8" fill="#7a7f86" opacity=".45"/><rect x="80" y="81.2" width="8" height=".8" fill="#7a7f86" opacity=".45"/><rect x="80" y="84.8" width="6" height=".8" fill="#7a7f86" opacity=".45"/><rect x="101" y="73.6" width="10" height="1.1" fill="#4a7fc4" opacity=".6"/><rect x="101" y="77.6" width="5" height=".8" fill="#7a7f86" opacity=".45"/><rect x="101" y="81.2" width="4" height=".8" fill="#7a7f86" opacity=".45"/><rect x="101" y="84.8" width="10" height=".8" fill="#7a7f86" opacity=".45"/><rect x="122" y="73.6" width="10" height="1.1" fill="#4a7fc4" opacity=".6"/><rect x="122" y="77.6" width="11" height=".8" fill="#7a7f86" opacity=".45"/><rect x="122" y="81.2" width="6" height=".8" fill="#7a7f86" opacity=".45"/><rect x="122" y="84.8" width="4" height=".8" fill="#7a7f86" opacity=".45"/><rect y="87.3" width="160" height="2.7" fill="#0c0f14"/><rect x="38" y="88" width="2.4" height="1.4" fill="#3a86d8"/><rect x="42" y="88" width="2" height="1.4" fill="#e8c84a"/><rect x="46" y="88" width="2" height="1.4" fill="#ddd"/><rect x="50" y="88" width="2" height="1.4" fill="#ddd"/></svg><div style="left:1512px;top:430.3px;width:43px;height:16.6px;background:rgba(52,52,56,.8);border-radius:2px"></div><span class="t" style="left:1518.00px;top:430.00px;line-height:18px;font-size:13.5px;color:#fff;font-weight:bold;transform:scaleX(0.9123);--w:31.50;">18:44</span><span class="t" style="left:1678.00px;top:378.00px;line-height:20px;font-size:15px;color:#2692ff;transform:scaleX(1.0065);--w:42.79;">Win10</span><span class="c" style="left:1720.79px;top:380.70px;width:42.00px;height:14px;font-size:14px;color:#2692ff;">下安装</span><span class="t" style="left:1762.79px;top:378.00px;line-height:20px;font-size:15px;color:#2692ff;transform:scaleX(1.0065);--w:38.61;">Pytho</span><span class="t" style="left:1678.00px;top:397.80px;line-height:20px;font-size:15px;color:#2692ff;transform:scaleX(1.0122);--w:16.89;">n3</span><span class="c" style="left:1694.89px;top:400.50px;width:14.00px;height:14px;font-size:14px;color:#2692ff;">和</span><span class="t" style="left:1708.89px;top:397.80px;line-height:20px;font-size:15px;color:#2692ff;transform:scaleX(1.0122);--w:55.71;">Python2</span><span class="t" style="left:1678.00px;top:418.80px;line-height:16px;font-size:12.5px;color:#85858c;transform:scaleX(1.0069);--w:21.00;">548</span><span class="c" style="left:1699.00px;top:420.80px;width:36.00px;height:12px;font-size:12px;color:#85858c;">次播放</span><svg style="left:1506px;top:464px;" width="160" height="90" viewBox="0 0 160 90"><rect width="160" height="90" fill="#2b2b2b"/><rect width="160" height="4" fill="#3c3f41"/><rect y="4" width="22" height="82" fill="#313335"/><rect x="22" y="5" width="88" height="68" fill="#3c3f41"/><rect x="22" y="5" width="88" height="3" fill="#4a4d50"/><rect x="23" y="9" width="25" height="63" fill="#313335"/><rect x="23" y="11" width="25" height="2.4" fill="#2f5a8c"/><rect x="2" y="8.0" width="17" height=".9" fill="#777"/><rect x="2" y="12.2" width="12" height=".9" fill="#777"/><rect x="2" y="16.4" width="13" height=".9" fill="#777"/><rect x="2" y="20.6" width="16" height=".9" fill="#777"/><rect x="2" y="24.8" width="8" height=".9" fill="#777"/><rect x="2" y="29.0" width="15" height=".9" fill="#777"/><rect x="2" y="33.2" width="11" height=".9" fill="#777"/><rect x="2" y="37.4" width="8" height=".9" fill="#777"/><rect x="2" y="41.6" width="10" height=".9" fill="#777"/><rect x="2" y="45.8" width="9" height=".9" fill="#777"/><rect x="2" y="50.0" width="13" height=".9" fill="#777"/><rect x="2" y="54.2" width="15" height=".9" fill="#777"/><rect x="2" y="58.4" width="11" height=".9" fill="#777"/><rect x="2" y="62.6" width="14" height=".9" fill="#777"/><rect x="2" y="66.8" width="16" height=".9" fill="#777"/><rect x="2" y="71.0" width="9" height=".9" fill="#777"/><rect x="2" y="75.2" width="17" height=".9" fill="#777"/><rect x="52" y="12.0" width="29" height=".9" fill="#8a8a8a" opacity=".7"/><rect x="52" y="16.0" width="14" height=".9" fill="#8a8a8a" opacity=".7"/><rect x="52" y="20.0" width="27" height=".9" fill="#8a8a8a" opacity=".7"/><rect x="52" y="24.0" width="40" height=".9" fill="#8a8a8a" opacity=".7"/><rect x="52" y="28.0" width="31" height=".9" fill="#8a8a8a" opacity=".7"/><rect x="52" y="32.0" width="25" height=".9" fill="#8a8a8a" opacity=".7"/><rect x="52" y="36.0" width="38" height=".9" fill="#8a8a8a" opacity=".7"/><rect x="52" y="40.0" width="24" height=".9" fill="#8a8a8a" opacity=".7"/><rect x="52" y="44.0" width="18" height=".9" fill="#8a8a8a" opacity=".7"/><rect x="52" y="48.0" width="22" height=".9" fill="#8a8a8a" opacity=".7"/><rect x="52" y="52.0" width="42" height=".9" fill="#8a8a8a" opacity=".7"/><rect x="52" y="56.0" width="22" height=".9" fill="#8a8a8a" opacity=".7"/><rect x="52" y="60.0" width="22" height=".9" fill="#8a8a8a" opacity=".7"/><rect x="52" y="64.0" width="14" height=".9" fill="#8a8a8a" opacity=".7"/><rect x="93" y="68" width="14" height="3" fill="#4a6da0"/><rect y="87.4" width="160" height="2.6" fill="#0a0c10"/><rect x="8.0" y="88" width="1.4" height="1.4" fill="#d33"/><rect x="11.7" y="88" width="1.4" height="1.4" fill="#3a7"/><rect x="15.4" y="88" width="1.4" height="1.4" fill="#fc3"/><rect x="19.1" y="88" width="1.4" height="1.4" fill="#39f"/><rect x="22.8" y="88" width="1.4" height="1.4" fill="#e73"/><rect x="26.5" y="88" width="1.4" height="1.4" fill="#bbb"/><rect x="30.2" y="88" width="1.4" height="1.4" fill="#6c4"/><rect x="33.9" y="88" width="1.4" height="1.4" fill="#d33"/><rect x="37.6" y="88" width="1.4" height="1.4" fill="#3a7"/><rect x="41.3" y="88" width="1.4" height="1.4" fill="#fc3"/><rect x="45.0" y="88" width="1.4" height="1.4" fill="#39f"/><rect x="48.7" y="88" width="1.4" height="1.4" fill="#e73"/><rect x="52.4" y="88" width="1.4" height="1.4" fill="#bbb"/><rect x="56.1" y="88" width="1.4" height="1.4" fill="#6c4"/><rect x="59.8" y="88" width="1.4" height="1.4" fill="#d33"/><rect x="63.5" y="88" width="1.4" height="1.4" fill="#3a7"/><rect x="67.2" y="88" width="1.4" height="1.4" fill="#fc3"/><rect x="70.9" y="88" width="1.4" height="1.4" fill="#39f"/><rect x="74.6" y="88" width="1.4" height="1.4" fill="#e73"/><rect x="78.3" y="88" width="1.4" height="1.4" fill="#bbb"/><rect x="82.0" y="88" width="1.4" height="1.4" fill="#6c4"/><rect x="85.7" y="88" width="1.4" height="1.4" fill="#d33"/><rect x="89.4" y="88" width="1.4" height="1.4" fill="#3a7"/><rect x="93.1" y="88" width="1.4" height="1.4" fill="#fc3"/><rect x="96.8" y="88" width="1.4" height="1.4" fill="#39f"/><rect x="100.5" y="88" width="1.4" height="1.4" fill="#e73"/></svg><div style="left:1512px;top:532.3px;width:43px;height:16.6px;background:rgba(52,52,56,.8);border-radius:2px"></div><span class="t" style="left:1518.00px;top:532.00px;line-height:18px;font-size:13.5px;color:#fff;font-weight:bold;transform:scaleX(0.9123);--w:31.50;">18:50</span><span class="t" style="left:1676.00px;top:482.00px;line-height:20px;font-size:15px;color:#e4e4e6;transform:scaleX(0.9747);--w:60.93;">PyCharm</span><span class="c" style="left:1736.93px;top:484.70px;width:28.00px;height:14px;font-size:14px;color:#e4e4e6;">开发</span><span class="t" style="left:1764.93px;top:482.00px;line-height:20px;font-size:15px;color:#e4e4e6;transform:scaleX(0.9747);--w:30.07;">Djan</span><span class="t" style="left:1676.00px;top:501.80px;line-height:20px;font-size:15px;color:#e4e4e6;transform:scaleX(1.0788);--w:18.00;">go</span><span class="c" style="left:1694.00px;top:504.50px;width:70.00px;height:14px;font-size:14px;color:#e4e4e6;">项目的配置</span><span class="t" style="left:1676.00px;top:522.80px;line-height:16px;font-size:12.5px;color:#85858c;transform:scaleX(1.0069);--w:21.00;">395</span><span class="c" style="left:1697.00px;top:524.80px;width:36.00px;height:12px;font-size:12px;color:#85858c;">次播放</span><svg style="left:1506px;top:564px;" width="160" height="90" viewBox="0 0 160 90"><rect width="160" height="90" fill="#3c3f41"/><rect width="160" height="4" fill="#ececec"/><rect y="4" width="34" height="82" fill="#3a3d50"/><rect x="1" y="16" width="32" height="3" fill="#4b6eaf"/><rect x="34" y="6" width="126" height="80" fill="#45494a"/><rect x="44" y="14" width="70" height="60" fill="#3c3f41"/><rect x="44" y="14" width="70" height="2.4" fill="#e8e8e8"/><rect x="48" y="21" width="22" height="5" fill="#4b6eaf"/><rect x="50" y="22" width="8" height="2" fill="#e6c84a"/><rect x="82" y="25" width="8" height="2" fill="#49b35a"/><rect x="3" y="8.0" width="17" height=".9" fill="#9a9aa8" opacity=".8"/><rect x="3" y="12.4" width="19" height=".9" fill="#9a9aa8" opacity=".8"/><rect x="3" y="16.8" width="15" height=".9" fill="#9a9aa8" opacity=".8"/><rect x="3" y="21.2" width="14" height=".9" fill="#9a9aa8" opacity=".8"/><rect x="3" y="25.6" width="12" height=".9" fill="#9a9aa8" opacity=".8"/><rect x="3" y="30.0" width="12" height=".9" fill="#9a9aa8" opacity=".8"/><rect x="3" y="34.4" width="23" height=".9" fill="#9a9aa8" opacity=".8"/><rect x="3" y="38.8" width="20" height=".9" fill="#9a9aa8" opacity=".8"/><rect x="3" y="43.2" width="10" height=".9" fill="#9a9aa8" opacity=".8"/><rect x="3" y="47.6" width="15" height=".9" fill="#9a9aa8" opacity=".8"/><rect x="3" y="52.0" width="18" height=".9" fill="#9a9aa8" opacity=".8"/><rect x="3" y="56.4" width="17" height=".9" fill="#9a9aa8" opacity=".8"/><rect x="3" y="60.8" width="24" height=".9" fill="#9a9aa8" opacity=".8"/><rect x="3" y="65.2" width="19" height=".9" fill="#9a9aa8" opacity=".8"/><rect x="3" y="69.6" width="11" height=".9" fill="#9a9aa8" opacity=".8"/><rect x="3" y="74.0" width="15" height=".9" fill="#9a9aa8" opacity=".8"/><rect x="80" y="30.0" width="27" height=".9" fill="#aaa" opacity=".6"/><rect x="118" y="30.0" width="29" height=".9" fill="#aaa" opacity=".6"/><rect x="80" y="33.5" width="32" height=".9" fill="#aaa" opacity=".6"/><rect x="118" y="33.5" width="11" height=".9" fill="#aaa" opacity=".6"/><rect x="80" y="37.0" width="22" height=".9" fill="#aaa" opacity=".6"/><rect x="118" y="37.0" width="15" height=".9" fill="#aaa" opacity=".6"/><rect x="80" y="40.5" width="32" height=".9" fill="#aaa" opacity=".6"/><rect x="118" y="40.5" width="24" height=".9" fill="#aaa" opacity=".6"/><rect x="80" y="44.0" width="23" height=".9" fill="#aaa" opacity=".6"/><rect x="118" y="44.0" width="15" height=".9" fill="#aaa" opacity=".6"/><rect x="80" y="47.5" width="15" height=".9" fill="#aaa" opacity=".6"/><rect x="118" y="47.5" width="17" height=".9" fill="#aaa" opacity=".6"/><rect x="80" y="51.0" width="11" height=".9" fill="#aaa" opacity=".6"/><rect x="118" y="51.0" width="13" height=".9" fill="#aaa" opacity=".6"/><rect x="80" y="54.5" width="14" height=".9" fill="#aaa" opacity=".6"/><rect x="118" y="54.5" width="26" height=".9" fill="#aaa" opacity=".6"/><rect x="80" y="58.0" width="28" height=".9" fill="#aaa" opacity=".6"/><rect x="118" y="58.0" width="12" height=".9" fill="#aaa" opacity=".6"/><rect x="80" y="61.5" width="32" height=".9" fill="#aaa" opacity=".6"/><rect x="118" y="61.5" width="22" height=".9" fill="#aaa" opacity=".6"/><rect x="80" y="65.0" width="13" height=".9" fill="#aaa" opacity=".6"/><rect x="118" y="65.0" width="19" height=".9" fill="#aaa" opacity=".6"/><rect x="80" y="68.5" width="16" height=".9" fill="#aaa" opacity=".6"/><rect x="118" y="68.5" width="31" height=".9" fill="#aaa" opacity=".6"/><rect x="118" y="23" width="18" height="1.4" fill="#6a9ae0"/><rect y="87.4" width="160" height="2.6" fill="#0a0c10"/><rect x="8.0" y="88" width="1.4" height="1.4" fill="#d33"/><rect x="11.7" y="88" width="1.4" height="1.4" fill="#3a7"/><rect x="15.4" y="88" width="1.4" height="1.4" fill="#fc3"/><rect x="19.1" y="88" width="1.4" height="1.4" fill="#39f"/><rect x="22.8" y="88" width="1.4" height="1.4" fill="#e73"/><rect x="26.5" y="88" width="1.4" height="1.4" fill="#bbb"/><rect x="30.2" y="88" width="1.4" height="1.4" fill="#6c4"/><rect x="33.9" y="88" width="1.4" height="1.4" fill="#d33"/><rect x="37.6" y="88" width="1.4" height="1.4" fill="#3a7"/><rect x="41.3" y="88" width="1.4" height="1.4" fill="#fc3"/><rect x="45.0" y="88" width="1.4" height="1.4" fill="#39f"/><rect x="48.7" y="88" width="1.4" height="1.4" fill="#e73"/><rect x="52.4" y="88" width="1.4" height="1.4" fill="#bbb"/><rect x="56.1" y="88" width="1.4" height="1.4" fill="#6c4"/><rect x="59.8" y="88" width="1.4" height="1.4" fill="#d33"/><rect x="63.5" y="88" width="1.4" height="1.4" fill="#3a7"/><rect x="67.2" y="88" width="1.4" height="1.4" fill="#fc3"/><rect x="70.9" y="88" width="1.4" height="1.4" fill="#39f"/><rect x="74.6" y="88" width="1.4" height="1.4" fill="#e73"/><rect x="78.3" y="88" width="1.4" height="1.4" fill="#bbb"/><rect x="82.0" y="88" width="1.4" height="1.4" fill="#6c4"/><rect x="85.7" y="88" width="1.4" height="1.4" fill="#d33"/><rect x="89.4" y="88" width="1.4" height="1.4" fill="#3a7"/><rect x="93.1" y="88" width="1.4" height="1.4" fill="#fc3"/><rect x="96.8" y="88" width="1.4" height="1.4" fill="#39f"/><rect x="100.5" y="88" width="1.4" height="1.4" fill="#e73"/></svg><div style="left:1512px;top:632.3px;width:43px;height:16.6px;background:rgba(52,52,56,.8);border-radius:2px"></div><span class="t" style="left:1518.00px;top:632.00px;line-height:18px;font-size:13.5px;color:#fff;font-weight:bold;transform:scaleX(0.9123);--w:31.50;">53:50</span><span class="t" style="left:1676.00px;top:582.00px;line-height:20px;font-size:15px;color:#e4e4e6;transform:scaleX(0.9748);--w:57.69;">Pycharm</span><span class="c" style="left:1733.69px;top:584.70px;width:56.00px;height:14px;font-size:14px;color:#e4e4e6;">使用秘籍</span><span class="t" style="left:1789.69px;top:582.00px;line-height:20px;font-size:15px;color:#e4e4e6;transform:scaleX(0.9748);--w:7.31;">v</span><span class="t" style="left:1676.00px;top:601.80px;line-height:20px;font-size:15px;color:#e4e4e6;transform:scaleX(0.9112);--w:19.00;">3.0</span><span class="t" style="left:1676.00px;top:622.80px;line-height:16px;font-size:12.5px;color:#85858c;transform:scaleX(0.9846);--w:30.80;">3,309</span><span class="c" style="left:1706.80px;top:624.80px;width:36.00px;height:12px;font-size:12px;color:#85858c;">次播放</span><svg style="left:1506px;top:664px;" width="160" height="90" viewBox="0 0 160 90"><rect width="160" height="90" fill="#ffffff"/><rect width="160" height="13" fill="#f3f5f9"/><rect x="62" y="5" width="3" height="3" fill="#e33"/><rect x="65" y="5" width="3" height="3" fill="#f90"/><rect x="69" y="5" width="3" height="3" fill="#fd0"/><rect x="72" y="5" width="3" height="3" fill="#3b3"/><rect x="76" y="5" width="3" height="3" fill="#39f"/><rect x="80" y="5" width="3" height="3" fill="#93c"/><rect x="83" y="5" width="3" height="3" fill="#000"/><rect x="87" y="5" width="3" height="3" fill="#888"/><rect x="56" y="4" width="3" height="6" fill="#111"/><rect x="36" y="5" width="14" height="3" fill="#9ab7e0"/><rect x="2" y="14" width="61" height="70" fill="#fff" stroke="#b8c4cc" stroke-width=".6"/><rect x="63" y="13" width="97" height="74" fill="#fff"/><rect x="4" y="16" width="57" height="11" fill="none" stroke="#e06a78" stroke-width="1"/><rect x="4" y="30" width="57" height="11" fill="none" stroke="#7cc48f" stroke-width="1"/><rect x="3" y="29" width="59" height="33" fill="none" stroke="#8ac6e8" stroke-width="1"/><rect y="86" width="160" height="1" fill="#e6e6e6"/><rect y="87.4" width="160" height="2.6" fill="#0a0c10"/><rect x="8.0" y="88" width="1.4" height="1.4" fill="#d33"/><rect x="11.7" y="88" width="1.4" height="1.4" fill="#3a7"/><rect x="15.4" y="88" width="1.4" height="1.4" fill="#fc3"/><rect x="19.1" y="88" width="1.4" height="1.4" fill="#39f"/><rect x="22.8" y="88" width="1.4" height="1.4" fill="#e73"/><rect x="26.5" y="88" width="1.4" height="1.4" fill="#bbb"/><rect x="30.2" y="88" width="1.4" height="1.4" fill="#6c4"/><rect x="33.9" y="88" width="1.4" height="1.4" fill="#d33"/><rect x="37.6" y="88" width="1.4" height="1.4" fill="#3a7"/><rect x="41.3" y="88" width="1.4" height="1.4" fill="#fc3"/><rect x="45.0" y="88" width="1.4" height="1.4" fill="#39f"/><rect x="48.7" y="88" width="1.4" height="1.4" fill="#e73"/><rect x="52.4" y="88" width="1.4" height="1.4" fill="#bbb"/><rect x="56.1" y="88" width="1.4" height="1.4" fill="#6c4"/><rect x="59.8" y="88" width="1.4" height="1.4" fill="#d33"/><rect x="63.5" y="88" width="1.4" height="1.4" fill="#3a7"/><rect x="67.2" y="88" width="1.4" height="1.4" fill="#fc3"/><rect x="70.9" y="88" width="1.4" height="1.4" fill="#39f"/><rect x="74.6" y="88" width="1.4" height="1.4" fill="#e73"/><rect x="78.3" y="88" width="1.4" height="1.4" fill="#bbb"/><rect x="82.0" y="88" width="1.4" height="1.4" fill="#6c4"/><rect x="85.7" y="88" width="1.4" height="1.4" fill="#d33"/><rect x="89.4" y="88" width="1.4" height="1.4" fill="#3a7"/><rect x="93.1" y="88" width="1.4" height="1.4" fill="#fc3"/><rect x="96.8" y="88" width="1.4" height="1.4" fill="#39f"/><rect x="100.5" y="88" width="1.4" height="1.4" fill="#e73"/></svg><div style="left:1512px;top:732.3px;width:43px;height:16.6px;background:rgba(52,52,56,.8);border-radius:2px"></div><span class="t" style="left:1518.00px;top:732.00px;line-height:18px;font-size:13.5px;color:#fff;font-weight:bold;transform:scaleX(0.9123);--w:31.50;">40:04</span><span class="t" style="left:1676.00px;top:682.00px;line-height:20px;font-size:15px;color:#e4e4e6;--w:76.95;">Django1.10</span><span class="c" style="left:1752.95px;top:684.70px;width:28.00px;height:14px;font-size:14px;color:#e4e4e6;">教程</span><span class="t" style="left:1780.95px;top:682.00px;line-height:20px;font-size:15px;color:#e4e4e6;--w:17.55;"> -2</span><span class="t" style="left:1676.00px;top:701.80px;line-height:20px;font-size:15px;color:#e4e4e6;transform:scaleX(0.9564);--w:16.74;">0 -</span><span class="c" style="left:1692.74px;top:704.50px;width:84.00px;height:14px;font-size:14px;color:#e4e4e6;">模板和模板继</span><span class="t" style="left:1776.74px;top:701.80px;line-height:20px;font-size:15px;color:#e4e4e6;transform:scaleX(0.9564);--w:11.96;">...</span><span class="t" style="left:1676.00px;top:722.80px;line-height:16px;font-size:12.5px;color:#85858c;transform:scaleX(1.0069);--w:14.00;">81</span><span class="c" style="left:1690.00px;top:724.80px;width:36.00px;height:12px;font-size:12px;color:#85858c;">次播放</span><svg style="left:1506px;top:764px;" width="160" height="90" viewBox="0 0 160 90"><rect width="160" height="90" fill="#2b2b26"/><rect width="160" height="3" fill="#f4f4f4"/><rect y="3" width="22" height="84" fill="#e9e9e9"/><rect x="22" y="3" width="138" height="3" fill="#3a3a34"/><rect x="36" y="11.2" width="33" height=".8" fill="#d8c86a" opacity=".5"/><rect x="25" y="11.2" width="3" height="1" fill="#77776a"/><rect x="42" y="17.4" width="52" height=".8" fill="#d8c86a" opacity=".5"/><rect x="25" y="17.4" width="3" height="1" fill="#77776a"/><rect x="36" y="26.7" width="26" height=".8" fill="#b0b09a" opacity=".5"/><rect x="25" y="26.7" width="3" height="1" fill="#77776a"/><rect x="36" y="29.8" width="50" height=".8" fill="#b0b09a" opacity=".5"/><rect x="25" y="29.8" width="3" height="1" fill="#77776a"/><rect x="36" y="32.9" width="18" height=".8" fill="#7fb8c9" opacity=".5"/><rect x="25" y="32.9" width="3" height="1" fill="#77776a"/><rect x="30" y="39.1" width="19" height=".8" fill="#8f8f80" opacity=".5"/><rect x="25" y="39.1" width="3" height="1" fill="#77776a"/><rect x="30" y="42.2" width="31" height=".8" fill="#7fb8c9" opacity=".5"/><rect x="25" y="42.2" width="3" height="1" fill="#77776a"/><rect x="30" y="48.4" width="29" height=".8" fill="#c96a8a" opacity=".5"/><rect x="25" y="48.4" width="3" height="1" fill="#77776a"/><rect x="36" y="54.6" width="50" height=".8" fill="#7fb8c9" opacity=".5"/><rect x="25" y="54.6" width="3" height="1" fill="#77776a"/><rect x="42" y="60.8" width="68" height=".8" fill="#d8c86a" opacity=".5"/><rect x="25" y="60.8" width="3" height="1" fill="#77776a"/><rect x="30" y="67.0" width="67" height=".8" fill="#b0b09a" opacity=".5"/><rect x="25" y="67.0" width="3" height="1" fill="#77776a"/><rect x="30" y="70.1" width="40" height=".8" fill="#d8c86a" opacity=".5"/><rect x="25" y="70.1" width="3" height="1" fill="#77776a"/><rect x="30" y="73.2" width="65" height=".8" fill="#c96a8a" opacity=".5"/><rect x="25" y="73.2" width="3" height="1" fill="#77776a"/><rect x="42" y="76.3" width="23" height=".8" fill="#a6a08a" opacity=".5"/><rect x="25" y="76.3" width="3" height="1" fill="#77776a"/><rect x="36" y="79.4" width="13" height=".8" fill="#d8c86a" opacity=".5"/><rect x="25" y="79.4" width="3" height="1" fill="#77776a"/><rect x="3" y="8.0" width="10" height=".9" fill="#8a8a8a"/><rect x="3" y="11.2" width="9" height=".9" fill="#8a8a8a"/><rect x="3" y="14.4" width="15" height=".9" fill="#8a8a8a"/><rect x="3" y="17.6" width="14" height=".9" fill="#8a8a8a"/><rect x="3" y="20.8" width="14" height=".9" fill="#8a8a8a"/><rect x="3" y="24.0" width="14" height=".9" fill="#8a8a8a"/><rect x="3" y="27.2" width="8" height=".9" fill="#8a8a8a"/><rect x="3" y="30.4" width="10" height=".9" fill="#8a8a8a"/><rect x="3" y="33.6" width="10" height=".9" fill="#8a8a8a"/><rect x="3" y="36.8" width="11" height=".9" fill="#8a8a8a"/><rect x="3" y="40.0" width="11" height=".9" fill="#8a8a8a"/><rect x="3" y="43.2" width="8" height=".9" fill="#8a8a8a"/><rect x="3" y="46.4" width="11" height=".9" fill="#8a8a8a"/><rect x="3" y="49.6" width="7" height=".9" fill="#8a8a8a"/><rect x="152" y="6" width="6" height="20" fill="#3c3c34"/><rect y="87.4" width="160" height="2.6" fill="#0a0c10"/><rect x="8.0" y="88" width="1.4" height="1.4" fill="#d33"/><rect x="11.7" y="88" width="1.4" height="1.4" fill="#3a7"/><rect x="15.4" y="88" width="1.4" height="1.4" fill="#fc3"/><rect x="19.1" y="88" width="1.4" height="1.4" fill="#39f"/><rect x="22.8" y="88" width="1.4" height="1.4" fill="#e73"/><rect x="26.5" y="88" width="1.4" height="1.4" fill="#bbb"/><rect x="30.2" y="88" width="1.4" height="1.4" fill="#6c4"/><rect x="33.9" y="88" width="1.4" height="1.4" fill="#d33"/><rect x="37.6" y="88" width="1.4" height="1.4" fill="#3a7"/><rect x="41.3" y="88" width="1.4" height="1.4" fill="#fc3"/><rect x="45.0" y="88" width="1.4" height="1.4" fill="#39f"/><rect x="48.7" y="88" width="1.4" height="1.4" fill="#e73"/><rect x="52.4" y="88" width="1.4" height="1.4" fill="#bbb"/><rect x="56.1" y="88" width="1.4" height="1.4" fill="#6c4"/><rect x="59.8" y="88" width="1.4" height="1.4" fill="#d33"/><rect x="63.5" y="88" width="1.4" height="1.4" fill="#3a7"/><rect x="67.2" y="88" width="1.4" height="1.4" fill="#fc3"/><rect x="70.9" y="88" width="1.4" height="1.4" fill="#39f"/><rect x="74.6" y="88" width="1.4" height="1.4" fill="#e73"/><rect x="78.3" y="88" width="1.4" height="1.4" fill="#bbb"/><rect x="82.0" y="88" width="1.4" height="1.4" fill="#6c4"/><rect x="85.7" y="88" width="1.4" height="1.4" fill="#d33"/><rect x="89.4" y="88" width="1.4" height="1.4" fill="#3a7"/><rect x="93.1" y="88" width="1.4" height="1.4" fill="#fc3"/><rect x="96.8" y="88" width="1.4" height="1.4" fill="#39f"/><rect x="100.5" y="88" width="1.4" height="1.4" fill="#e73"/></svg><div style="left:1512px;top:832.3px;width:43px;height:16.6px;background:rgba(52,52,56,.8);border-radius:2px"></div><span class="t" style="left:1518.00px;top:832.00px;line-height:18px;font-size:13.5px;color:#fff;font-weight:bold;transform:scaleX(0.9123);--w:31.50;">12:14</span><span class="t" style="left:1676.00px;top:782.00px;line-height:20px;font-size:15px;color:#e4e4e6;--w:76.54;">Django1.10</span><span class="c" style="left:1752.54px;top:784.70px;width:28.00px;height:14px;font-size:14px;color:#e4e4e6;">教程</span><span class="t" style="left:1780.54px;top:782.00px;line-height:20px;font-size:15px;color:#e4e4e6;--w:17.46;"> -1</span><span class="t" style="left:1676.00px;top:801.80px;line-height:20px;font-size:15px;color:#e4e4e6;--w:118.40;">9 -Django-Mess...</span><span class="t" style="left:1676.00px;top:822.80px;line-height:16px;font-size:12.5px;color:#85858c;transform:scaleX(1.0069);--w:14.00;">68</span><span class="c" style="left:1690.00px;top:824.80px;width:36.00px;height:12px;font-size:12px;color:#85858c;">次播放</span><div style="left:82px;top:794.8px;width:1404px;height:64px;background:#222128;"></div><div style="left:0px;top:858.5px;width:1903px;height:127.5px;background:#302f36;"></div><span class="c" style="left:391.60px;top:822.20px;width:24.00px;height:12px;font-size:12px;color:#85858c;">放器</span><span class="t" style="left:387.79px;top:885.80px;line-height:36px;font-size:28px;color:#e2e2e4;transform:scaleX(1.0076);--w:84.71;">ython2</span><div style="left:380px;top:931.1px;width:85.5px;height:26px;border-radius:13px;background:#4b4a51"></div><span class="c" style="left:405.60px;top:937.20px;width:42.00px;height:14px;font-size:14px;color:#2692ff;">已订阅</span><div style="left:0px;top:986px;width:1903px;height:30px;background:#ffffff;"></div><div style="left:0px;top:1015.5px;width:1920px;height:1px;background:#e4e4e4;"></div><div style="left:0px;top:1016.5px;width:1920px;height:23.5px;background:#f8f8f8;"></div><svg style="left:1691px;top:1020px;" width="17" height="17" viewBox="0 0 17 17"><path d="M4.6 9.8 Q5.4 4.4 10.6 2.2 Q13 1.4 15.2 1.8 Q15.6 4 14.8 6.4 Q12.6 11.6 7.2 12.4Z M4.8 9.6 L2 10.4 L4.4 7.2 M7.4 12.2 L6.6 15 L9.8 12.6 M2.2 12.2 L1.4 15.6 L4.8 14.8" fill="none" stroke="#5a5a60" stroke-width="1.3" stroke-linejoin="round"/><circle cx="11" cy="6" r="1.3" fill="none" stroke="#5a5a60" stroke-width="1.1"/></svg><svg style="left:1728.5px;top:1020px;" width="17" height="17" viewBox="0 0 17 17"><circle cx="8.5" cy="9" r="6.4" fill="none" stroke="#5a5a60" stroke-width="1.3"/><path d="M1.4 6.4 Q6 0 14.6 2.6 M8.5 6 V12 M5.5 9 H11.5" fill="none" stroke="#5a5a60" stroke-width="1.3"/></svg><svg style="left:1767.5px;top:1020px;" width="15" height="17" viewBox="0 0 15 17"><path d="M1 4 H14 M5 3.6 V1.4 H10 V3.6 M2.6 4.4 V15.6 H12.4 V4.4 M5.8 7 V13 M9.2 7 V13" fill="none" stroke="#5a5a60" stroke-width="1.3"/></svg><svg style="left:1804px;top:1020px;" width="17" height="17" viewBox="0 0 17 17"><path d="M1 6 H4 L8 2.4 V14.6 L4 11 H1Z" fill="none" stroke="#5a5a60" stroke-width="1.3" stroke-linejoin="round"/><path d="M10.6 5.6 Q12.4 8.5 10.6 11.4 M13 3.4 Q16.2 8.5 13 13.6" fill="none" stroke="#5a5a60" stroke-width="1.3"/></svg><svg style="left:1843.5px;top:1021px;" width="14" height="14" viewBox="0 0 14 14"><path d="M0.7 3.6 H10.4 V13.3 H0.7Z M3.4 3.4 V0.7 H13.3 V10.6 H10.6" fill="none" stroke="#5a5a60" stroke-width="1.3"/></svg><svg style="left:1881px;top:1021px;" width="15" height="15" viewBox="0 0 15 15"><circle cx="6.4" cy="6.4" r="5.4" fill="none" stroke="#5a5a60" stroke-width="1.3"/><path d="M10.4 10.4 L14 14" stroke="#5a5a60" stroke-width="1.4"/></svg><div style="left:0px;top:1040px;width:1928px;height:8px;background:#282929;"></div><div style="left:392px;top:1040px;width:1528px;height:8px;background:linear-gradient(90deg,#2a2c2c 0,#1f2e2f 28%,#232b2c 46%,#2e2627 60%,#272727 78%,#2b2b2b 100%);"></div><div style="left:1915px;top:1040px;width:1px;height:8px;background:#8a8a8a;"></div><span class="t" style="left:1815.00px;top:1043.20px;line-height:16px;font-size:12px;color:#fff;--w:30.00;">16:48</span><div style="left:0px;top:399.5px;width:48px;height:641px;background:#101010;"></div><div style="left:0px;top:452px;width:48px;height:48.3px;background:#073c6f;"></div><div style="left:16px;top:423px;width:16px;height:1px;background:#fff;"></div><div style="left:16px;top:428px;width:16px;height:1px;background:#fff;"></div><div style="left:16px;top:433px;width:16px;height:1px;background:#fff;"></div><svg style="left:15.5px;top:467.5px;" width="17" height="16" viewBox="0 0 17 16"><path d="M1 8.4 L8.5 1.4 L16 8.4 M3.2 6.8 V14.8 H7 V10 H10 V14.8 H13.8 V6.8" fill="none" stroke="#fff" stroke-width="1.2" stroke-linejoin="round"/></svg><svg style="left:16.5px;top:515.5px;" width="15" height="17" viewBox="0 0 15 17"><path d="M1 1 H14 V13.4 H1Z M1 13.4 V16 H14 V13.4" fill="none" stroke="#fff" stroke-width="1.3"/><circle cx="7.5" cy="6" r="1.9" fill="none" stroke="#fff" stroke-width="1.1"/></svg><svg style="left:15px;top:959.5px;" width="18" height="18" viewBox="0 0 18 18"><circle cx="9" cy="9" r="2.8" fill="none" stroke="#fff" stroke-width="1.2"/><path d="M9 1.2 L10.3 1.4 L10.8 3.4 L12.6 4.2 L14.4 3.2 L15.8 4.8 L14.6 6.5 L15.3 8.3 L17 8.8 V10.6 L15.2 11.2 L14.5 13 L15.5 14.6 L14 16 L12.3 15 L10.6 15.7 L10.2 17.4 H7.8 L7.4 15.7 L5.7 15 L4 16 L2.5 14.6 L3.5 13 L2.8 11.2 L1 10.6 V8.8 L2.7 8.3 L3.4 6.5 L2.2 4.8 L3.6 3.2 L5.4 4.2 L7.2 3.4 L7.7 1.4Z" fill="none" stroke="#fff" stroke-width="1.1" stroke-linejoin="round"/></svg><svg style="left:16px;top:1007px;" width="16" height="18" viewBox="0 0 16 18"><circle cx="5.4" cy="7" r="3.1" fill="#fff"/><path d="M0.2 17.6 Q0.2 11 5.4 11 Q10.6 11 10.6 17.6Z" fill="#fff"/><path d="M7.4 0.6 H15.6 V6.8 H11.6 L9.4 8.8 V6.8" fill="#fff"/></svg><div style="left:48px;top:399.5px;width:344px;height:640.5px;background:#ffffff;"></div><div style="left:48px;top:451px;width:344px;height:1px;background:#e6e6e6;"></div><svg style="left:64px;top:420.5px;" width="17" height="14" viewBox="0 0 17 14"><path d="M0.6 0.6 H16.4 V13.4 H0.6Z M0.6 3.4 H16.4" fill="none" stroke="#111" stroke-width="1.1"/><path d="M3 6 H7.4 V10.6 H3Z" fill="none" stroke="#111" stroke-width="1"/><path d="M9.4 6.4 H13.8 M9.4 8.4 H12 M9.4 10.4 H13.8" stroke="#111" stroke-width="1"/></svg><svg style="left:112.5px;top:419.5px;" width="13" height="16" viewBox="0 0 13 16"><path d="M0.6 0.6 H8 L12.4 5 V15.4 H0.6Z M8 0.6 V5 H12.4" fill="none" stroke="#111" stroke-width="1.1"/></svg><svg style="left:159.5px;top:419.5px;" width="17" height="17" viewBox="0 0 17 17"><circle cx="8.5" cy="8.5" r="7.7" fill="none" stroke="#111" stroke-width="1.1"/><ellipse cx="8.5" cy="8.5" rx="3.4" ry="7.7" fill="none" stroke="#111" stroke-width="1"/><path d="M0.8 8.5 H16.2 M2 4.6 H15 M2 12.4 H15" stroke="#111" stroke-width="1" fill="none"/></svg><span class="c" style="left:315.00px;top:420.00px;width:39.00px;height:13px;font-size:13px;color:#111;">筛选器</span><svg style="left:360px;top:423px;" width="16" height="10" viewBox="0 0 16 10"><path d="M1 1.2 L8 8.4 L15 1.2" fill="none" stroke="#222" stroke-width="1.2"/></svg><span class="c" style="left:60.00px;top:460.50px;width:52.00px;height:13px;font-size:13px;color:#111;font-weight:bold;">最佳匹配</span><div style="left:48px;top:483.8px;width:344px;height:63.8px;background:#b5d1ea;"></div><svg style="left:60px;top:499px;" width="32" height="32" viewBox="0 0 32 32"><path d="M9 4.5 L28 8.5 V23 L9 19Z" fill="#e8edf2"/><path d="M10.6 6.6 L26.6 10 V21 L10.6 17.6Z" fill="#29a3ea"/><path d="M15.4 13.4 L17.6 15.8 L22 11.4" fill="none" stroke="#fff" stroke-width="1.5"/><path d="M16 21 L21 22 L20 25.6 L15 24.4Z" fill="#c9d1d9"/><path d="M11 24.5 L24 27.2 L23 28.6 L10 25.8Z" fill="#dfe5ea"/><path d="M1 22.5 L12 20.8 L22 27.6 L11 30Z" fill="#f1f3f5"/><path d="M3 23 L11.6 21.7 L19.6 27.2 L11 29Z" fill="#cfd5db" opacity=".7"/></svg><span class="c" style="left:104.00px;top:499.00px;width:120.00px;height:15px;font-size:15px;color:#111;">编辑系统环境变量</span><span class="c" style="left:104.00px;top:521.20px;width:52.00px;height:13px;font-size:13px;color:#55595e;">控制面板</span><span class="c" style="left:60.00px;top:556.50px;width:52.00px;height:13px;font-size:13px;color:#111;font-weight:bold;">搜索建议</span><svg style="left:59.5px;top:589.5px;" width="18" height="18" viewBox="0 0 18 18"><circle cx="11.2" cy="6.4" r="4.9" fill="none" stroke="#1a1a1a" stroke-width="1.2"/><path d="M7.8 10 L0.8 17.2" stroke="#1a1a1a" stroke-width="1.3"/></svg><span class="c" style="left:88.00px;top:591.00px;width:90.00px;height:15px;font-size:15px;color:#111;">系统环境变量</span><span class="t" style="left:181.50px;top:590.00px;line-height:17px;font-size:13px;color:#777;--w:4.33;">-</span><span class="c" style="left:191.00px;top:592.50px;width:104.00px;height:13px;font-size:13px;color:#7a7a7a;">查看网络搜索结果</span><svg style="left:363px;top:590.5px;" width="11" height="16" viewBox="0 0 11 16"><path d="M1.2 1 L9.6 8 L1.2 15" fill="none" stroke="#505050" stroke-width="1"/></svg><svg style="left:59.5px;top:625.5px;" width="18" height="18" viewBox="0 0 18 18"><circle cx="11.2" cy="6.4" r="4.9" fill="none" stroke="#1a1a1a" stroke-width="1.2"/><path d="M7.8 10 L0.8 17.2" stroke="#1a1a1a" stroke-width="1.3"/></svg><span class="c" style="left:88.00px;top:627.00px;width:90.00px;height:15px;font-size:15px;color:#111;">系统环境变量</span><span class="c" style="left:178.00px;top:627.00px;width:30.00px;height:15px;font-size:15px;color:#111;font-weight:bold;">设置</span><svg style="left:363px;top:626.5px;" width="11" height="16" viewBox="0 0 11 16"><path d="M1.2 1 L9.6 8 L1.2 15" fill="none" stroke="#505050" stroke-width="1"/></svg><svg style="left:59.5px;top:661.5px;" width="18" height="18" viewBox="0 0 18 18"><circle cx="11.2" cy="6.4" r="4.9" fill="none" stroke="#1a1a1a" stroke-width="1.2"/><path d="M7.8 10 L0.8 17.2" stroke="#1a1a1a" stroke-width="1.3"/></svg><span class="c" style="left:88.00px;top:663.00px;width:90.00px;height:15px;font-size:15px;color:#111;">系统环境变量</span><span class="c" style="left:178.00px;top:663.00px;width:45.00px;height:15px;font-size:15px;color:#111;font-weight:bold;">被修改</span><svg style="left:363px;top:662.5px;" width="11" height="16" viewBox="0 0 11 16"><path d="M1.2 1 L9.6 8 L1.2 15" fill="none" stroke="#505050" stroke-width="1"/></svg><svg style="left:59.5px;top:697.5px;" width="18" height="18" viewBox="0 0 18 18"><circle cx="11.2" cy="6.4" r="4.9" fill="none" stroke="#1a1a1a" stroke-width="1.2"/><path d="M7.8 10 L0.8 17.2" stroke="#1a1a1a" stroke-width="1.3"/></svg><span class="c" style="left:88.00px;top:699.00px;width:90.00px;height:15px;font-size:15px;color:#111;">系统环境变量</span><span class="c" style="left:178.00px;top:699.00px;width:30.00px;height:15px;font-size:15px;color:#111;font-weight:bold;">在哪</span><svg style="left:363px;top:698.5px;" width="11" height="16" viewBox="0 0 11 16"><path d="M1.2 1 L9.6 8 L1.2 15" fill="none" stroke="#505050" stroke-width="1"/></svg><svg style="left:59.5px;top:733.5px;" width="18" height="18" viewBox="0 0 18 18"><circle cx="11.2" cy="6.4" r="4.9" fill="none" stroke="#1a1a1a" stroke-width="1.2"/><path d="M7.8 10 L0.8 17.2" stroke="#1a1a1a" stroke-width="1.3"/></svg><span class="c" style="left:88.00px;top:735.00px;width:90.00px;height:15px;font-size:15px;color:#111;">系统环境变量</span><span class="t" style="left:178.00px;top:732.50px;line-height:20px;font-size:15.5px;color:#111;font-weight:bold;transform:scaleX(1.0391);--w:34.00;">path</span><svg style="left:363px;top:734.5px;" width="11" height="16" viewBox="0 0 11 16"><path d="M1.2 1 L9.6 8 L1.2 15" fill="none" stroke="#505050" stroke-width="1"/></svg><svg style="left:59.5px;top:769.5px;" width="18" height="18" viewBox="0 0 18 18"><circle cx="11.2" cy="6.4" r="4.9" fill="none" stroke="#1a1a1a" stroke-width="1.2"/><path d="M7.8 10 L0.8 17.2" stroke="#1a1a1a" stroke-width="1.3"/></svg><span class="c" style="left:88.00px;top:771.00px;width:90.00px;height:15px;font-size:15px;color:#111;">系统环境变量</span><span class="c" style="left:182.50px;top:771.00px;width:90.00px;height:15px;font-size:15px;color:#111;font-weight:bold;">用户环境变量</span><svg style="left:363px;top:770.5px;" width="11" height="16" viewBox="0 0 11 16"><path d="M1.2 1 L9.6 8 L1.2 15" fill="none" stroke="#505050" stroke-width="1"/></svg><svg style="left:59.5px;top:805.5px;" width="18" height="18" viewBox="0 0 18 18"><circle cx="11.2" cy="6.4" r="4.9" fill="none" stroke="#1a1a1a" stroke-width="1.2"/><path d="M7.8 10 L0.8 17.2" stroke="#1a1a1a" stroke-width="1.3"/></svg><span class="c" style="left:88.00px;top:807.00px;width:90.00px;height:15px;font-size:15px;color:#111;">系统环境变量</span><span class="c" style="left:178.00px;top:807.00px;width:30.00px;height:15px;font-size:15px;color:#111;font-weight:bold;">异常</span><svg style="left:363px;top:806.5px;" width="11" height="16" viewBox="0 0 11 16"><path d="M1.2 1 L9.6 8 L1.2 15" fill="none" stroke="#505050" stroke-width="1"/></svg><svg style="left:59.5px;top:841.5px;" width="18" height="18" viewBox="0 0 18 18"><circle cx="11.2" cy="6.4" r="4.9" fill="none" stroke="#1a1a1a" stroke-width="1.2"/><path d="M7.8 10 L0.8 17.2" stroke="#1a1a1a" stroke-width="1.3"/></svg><span class="c" style="left:88.00px;top:843.00px;width:90.00px;height:15px;font-size:15px;color:#111;">系统环境变量</span><span class="c" style="left:182.50px;top:843.00px;width:45.00px;height:15px;font-size:15px;color:#111;font-weight:bold;">注册表</span><svg style="left:363px;top:842.5px;" width="11" height="16" viewBox="0 0 11 16"><path d="M1.2 1 L9.6 8 L1.2 15" fill="none" stroke="#505050" stroke-width="1"/></svg><div style="left:48px;top:1040px;width:344px;height:8px;background:#f2f2f2;"></div><div style="left:0px;top:1040px;width:48px;height:8px;background:#2b2b2b;"></div><svg style="left:190px;top:520px;" width="160" height="420" viewBox="190 520 160 420"><path d="M211 533.5 L207.5 550 L212.8 548.6 L331.2 926 L332.4 925.6 L219.8 546.8 L223.2 547.2 Z" fill="#92c800"/></svg><svg style="left:180px;top:920px;" width="140" height="128" viewBox="180 920 140 128"><path d="M196.2 1046.8 L202 1030 L205.6 1033.4 L306 932.7 L211 1037.6 L213.4 1040.6 Z" fill="#92c800"/></svg><div style="left:1903px;top:95px;width:17px;height:921px;background:#f1f1f1;"></div><div style="left:1905px;top:141px;width:13px;height:171.5px;background:#c1c1c1;"></div><svg style="left:1907.2px;top:101.3px;" width="8" height="5" viewBox="0 0 8 5"><path d="M0 5 L4 0.6 L8 5Z" fill="#505050"/></svg><svg style="left:1907.5px;top:1004.5px;" width="8" height="5" viewBox="0 0 8 5"><path d="M0 0 L4 4.4 L8 0Z" fill="#505050"/></svg><div style="left:1920px;top:0px;width:8px;height:8px;background:#000;"></div><div style="left:1920px;top:8px;width:8px;height:29px;background:#033261;"></div><div style="left:1920px;top:37px;width:8px;height:36px;background:#587f9d;"></div><div style="left:1920px;top:73px;width:8px;height:30px;background:#03406c;"></div><div style="left:1920px;top:103px;width:8px;height:735.5px;background:linear-gradient(90deg,#b6b6b6 0,#b6b6b6 5.5px,#5a5a5a 5.5px,#5a5a5a 6.5px,#d6d6d6 6.5px);"></div><div style="left:1926.5px;top:218px;width:1.5px;height:24px;background:#b9c9ec;"></div><div style="left:1920px;top:838.5px;width:8px;height:24.5px;background:#f8f8f8;"></div><div style="left:1920px;top:863px;width:8px;height:39px;background:#333333;"></div><div style="left:1920px;top:902px;width:8px;height:146px;background:#000;"></div><div style="left:1895px;top:766px;width:25px;height:60px;overflow:hidden"><div style="left:6px;top:6px;width:47px;height:47px;border-radius:50%;box-sizing:border-box;border:2.5px solid #e4e8e4;background:radial-gradient(circle at 45% 30%,#5fdc72 0,#3cc653 45%,#2db146 100%);box-shadow:0 0 3px rgba(0,0,0,.45)"></div></div><span class="t" style="left:1906.30px;top:787.00px;line-height:16px;font-size:12.5px;color:#fff;font-weight:bold;font-family:'Liberation Serif',serif;transform:scaleX(1.0560);--w:13.20;">51</span></div>
<script>
(function(){var e=document.querySelectorAll('span.t');for(var i=0;i<e.length;i++){var s=e[i],w=parseFloat(s.style.getPropertyValue('--w'));if(!w)continue;var t=s.style.transform;s.style.transform='none';var a=s.getBoundingClientRect().width;s.style.transform=(a>0)?'scaleX('+(w/a).toFixed(4)+')':t;}})();
</script>
</body></html>
